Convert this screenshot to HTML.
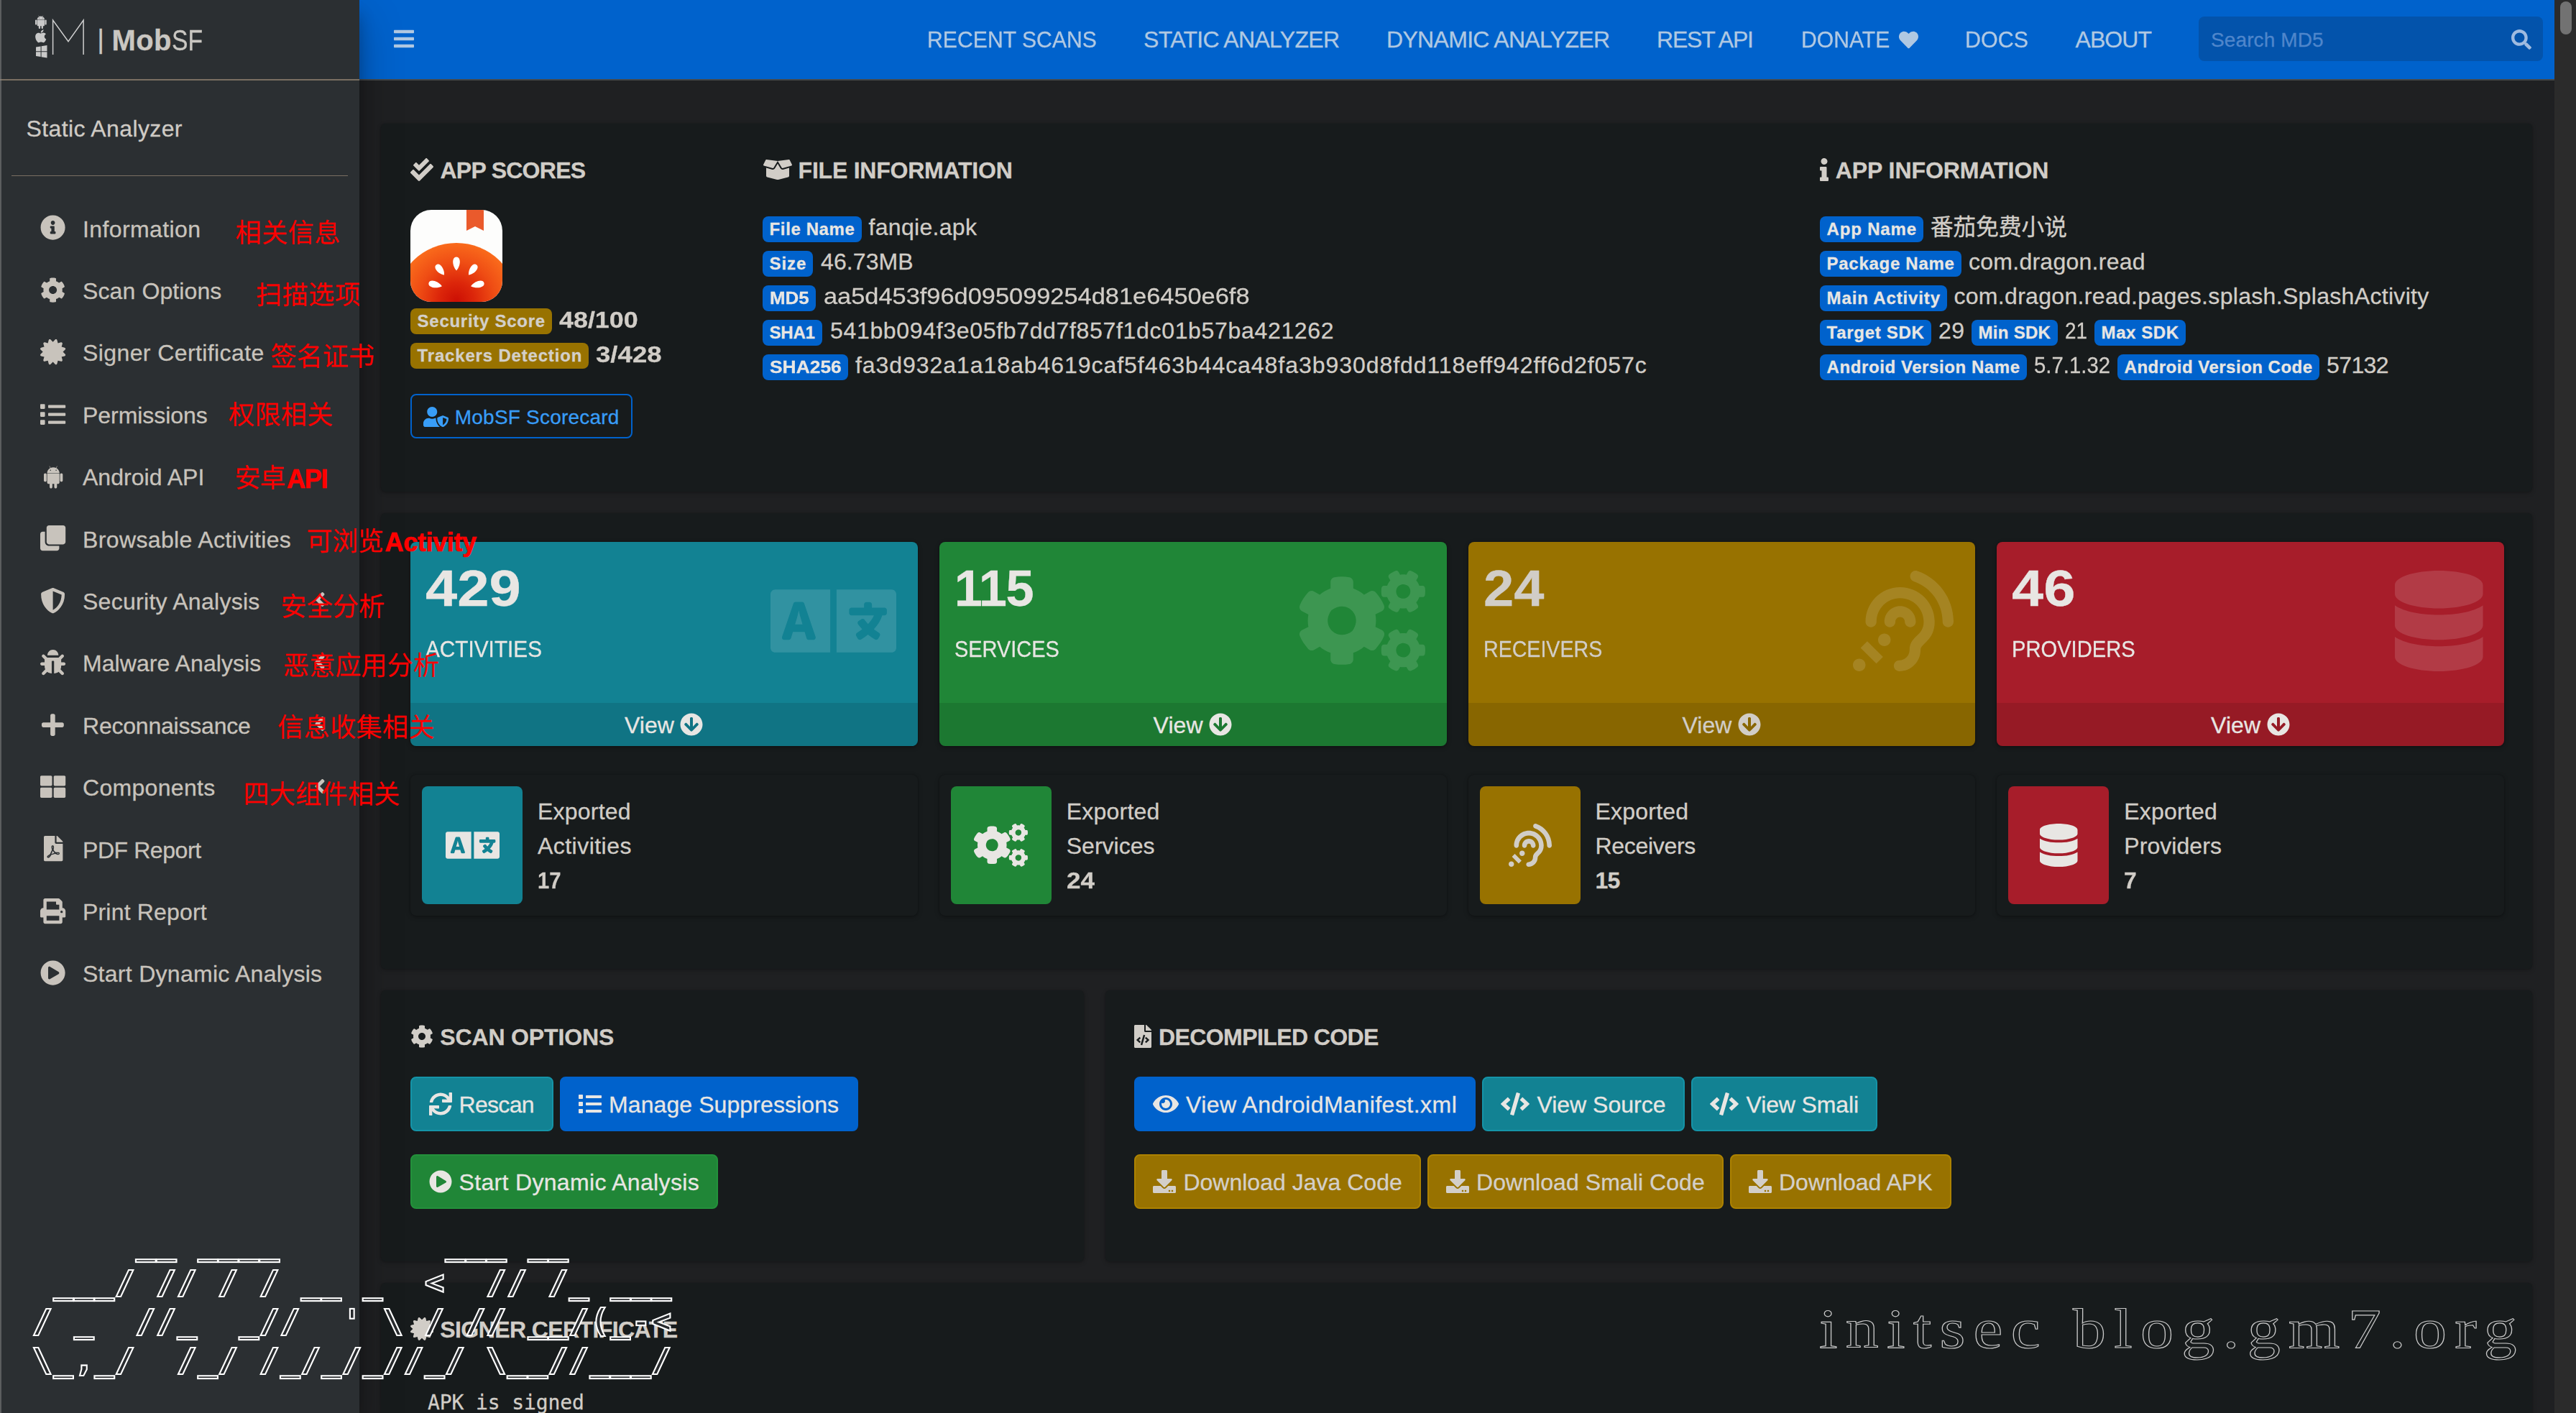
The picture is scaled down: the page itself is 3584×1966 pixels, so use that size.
<!DOCTYPE html>
<html lang="en"><head><meta charset="utf-8"><title>Static Analysis - MobSF</title><style>
html,body{margin:0;padding:0;background:#1f2022;}
body{width:3584px;height:1966px;overflow:hidden;position:relative;font-family:"Liberation Sans","Noto Sans CJK SC",sans-serif;}
.t{position:absolute;white-space:pre;display:block;-webkit-text-stroke:0.3px;}
.b{position:absolute;}
.ic{position:absolute;display:block;overflow:visible;}
.content{position:absolute;left:0;top:0;width:3584px;height:1966px;background:#1f2022;overflow:hidden;}
.navbar{position:absolute;left:500px;top:0;width:3054px;height:110px;background:#0062cc;border-bottom:2px solid #45484a;}
.navbar>*{margin-left:-500px;}
.sidebar{position:absolute;left:0;top:0;width:500px;height:1966px;background:#2b2f32;box-shadow:0 28px 56px rgba(0,0,0,.25),0 20px 20px rgba(0,0,0,.22);}
.tf{position:absolute;left:0;right:0;bottom:0;height:60.5px;background:rgba(0,0,0,.1);}
.anno{position:absolute;left:0;top:0;}
.wm1{position:absolute;margin:0;left:46.5px;top:1703px;font-family:"DejaVu Sans Mono","Liberation Mono",monospace;font-size:42.6px;line-height:54.1px;letter-spacing:3.06px;color:#282b2e;-webkit-text-stroke:4.2px #ffffff;paint-order:stroke fill;filter:blur(0.45px);white-space:pre;}
</style></head><body>
<main class="content">
<div class="b card" style="left:530px;top:172px;width:2993px;height:512px;background:#171b1c;box-shadow:0 0 2px rgba(0,0,0,.18),0 2px 6px rgba(0,0,0,.24);border-radius:6px;"></div>
<div class="b card" style="left:530px;top:714px;width:2993px;height:633.5px;background:#171b1c;box-shadow:0 0 2px rgba(0,0,0,.18),0 2px 6px rgba(0,0,0,.24);border-radius:6px;"></div>
<div class="b card" style="left:530px;top:1378px;width:978px;height:377px;background:#171b1c;box-shadow:0 0 2px rgba(0,0,0,.18),0 2px 6px rgba(0,0,0,.24);border-radius:6px;"></div>
<div class="b card" style="left:1538px;top:1378px;width:1985px;height:377px;background:#171b1c;box-shadow:0 0 2px rgba(0,0,0,.18),0 2px 6px rgba(0,0,0,.24);border-radius:6px;"></div>
<div class="b card" style="left:530px;top:1785px;width:2993px;height:260px;background:#171b1c;box-shadow:0 0 2px rgba(0,0,0,.18),0 2px 6px rgba(0,0,0,.24);border-radius:6px;"></div>
<svg class="ic" style="left:571px;top:220.4px;" width="32" height="32" viewBox="0 -448 512 512"><path fill="#d1cdc7" transform="scale(1,-1)" d="M505 273.2c9.2998 -9.2998 9.2998 -24.5 -0.0996094 -34l-296 -296.2c-9.30078 -9.40039 -24.5 -9.40039 -33.9004 0l-168 168.1c-9.40039 9.40039 -9.40039 24.6006 0 34l39.7002 39.7002c9.2998 9.40039 24.5 9.40039 33.8994 0l111.4 -111.5l239.5 239.5 c9.2998 9.40039 24.5 9.40039 33.9004 0zM180.7 167.2l-112 112.2c-6.2002 6.19922 -6.2002 16.2998 0 22.5996l45.2998 45.2998c6.2002 6.2998 16.4004 6.2998 22.5996 0l55.4004 -55.5l151.5 151.5c6.2002 6.2998 16.4004 6.2998 22.5996 0l45.2002 -45.2998 c6.2002 -6.2002 6.2002 -16.2998 0 -22.5996l-208 -208.2c-6.2002 -6.2998 -16.3994 -6.2998 -22.5996 0z"/></svg>
<span id="t0" class="t " style="left:612.5px;top:221.31px;font-size:32px;line-height:32px;color:#d1cdc7;font-weight:700;letter-spacing:-0.74px;">APP SCORES</span>
<svg class="ic" style="left:571px;top:292px" width="128" height="128" viewBox="0 0 128 128"><clipPath id="ac"><rect width="128" height="128" rx="29" ry="29"/></clipPath><radialGradient id="ag" gradientUnits="userSpaceOnUse" cx="64" cy="126" r="82"><stop offset="0" stop-color="#cc0f04"/><stop offset="0.3" stop-color="#dc260a"/><stop offset="0.65" stop-color="#ef4d14"/><stop offset="1" stop-color="#fa6c1c"/></radialGradient><g clip-path="url(#ac)"><rect width="128" height="128" fill="#fdfdfc"/><ellipse cx="64" cy="128" rx="84" ry="82" fill="url(#ag)"/><path d="M78 0h24v29l-12-6-12 6z" fill="#ea5a2c"/><g fill="#fff"><path transform="translate(64 75) rotate(0)" d="M0,-9.5 C6.4,-9.5 6.4,2.375 0,9.5 C-6.4,2.375 -6.4,-9.5 0,-9.5Z"/><path transform="translate(41.5 83.5) rotate(-38)" d="M0,-9.0 C6,-9.0 6,2.25 0,9.0 C-6,2.25 -6,-9.0 0,-9.0Z"/><path transform="translate(86.5 83.5) rotate(38)" d="M0,-9.0 C6,-9.0 6,2.25 0,9.0 C-6,2.25 -6,-9.0 0,-9.0Z"/><path transform="translate(34.7 104) rotate(-76)" d="M0,-9.5 C6.2,-9.5 6.2,2.375 0,9.5 C-6.2,2.375 -6.2,-9.5 0,-9.5Z"/><path transform="translate(93.3 104) rotate(76)" d="M0,-9.5 C6.2,-9.5 6.2,2.375 0,9.5 C-6.2,2.375 -6.2,-9.5 0,-9.5Z"/></g></g></svg>
<div class="b badge" style="left:571px;top:429px;width:196.7px;height:36px;background:#987200;border-radius:8px;"></div><span id="t1" class="t " style="left:580.6px;top:435px;font-size:24px;line-height:24px;color:#d3cfc9;font-weight:700;letter-spacing:0.72px;">Security Score</span>
<span id="t2" class="t " style="left:778px;top:428.91px;font-size:32px;line-height:32px;color:#d1cdc7;font-weight:700;transform:scaleX(1.1208);transform-origin:0 0;">48/100</span>
<div class="b badge" style="left:571px;top:477px;width:248px;height:36px;background:#987200;border-radius:8px;"></div><span id="t3" class="t " style="left:580.6px;top:483px;font-size:24px;line-height:24px;color:#d3cfc9;font-weight:700;letter-spacing:0.82px;">Trackers Detection</span>
<span id="t4" class="t " style="left:829px;top:476.91px;font-size:32px;line-height:32px;color:#d1cdc7;font-weight:700;transform:scaleX(1.1439);transform-origin:0 0;">3/428</span>
<div class="b btn-o" style="left:571px;top:548px;width:309px;height:62px;background:transparent;border:2px solid #0062cc;border-radius:8px;box-sizing:border-box;"></div>
<svg class="ic" style="left:589px;top:565.5px;" width="35" height="28" viewBox="0 -448 640 512"><path fill="#389df7" transform="scale(1,-1)" d="M622.3 176.9c10.7002 -4.2002 17.7002 -14 17.7002 -24.9004c0 -124.5 -81.5996 -193.9 -132.9 -213.9c-4.19922 -1.59961 -12.5996 -3.69922 -22.1992 0c-64.2002 25.1006 -132.9 102.301 -132.9 213.9c0 10.9004 7 20.7002 17.7002 24.9004l115.2 45 c9.59961 3.69922 18.0996 1.59961 22.1992 0zM496 -14.4004c34.5996 16.4004 89.9004 64.7002 95.5 151.801l-95.5 37.2998v-189.101zM224 192c-70.7002 0 -128 57.2998 -128 128s57.2998 128 128 128s128 -57.2998 128 -128s-57.2998 -128 -128 -128zM320 152 c0 -95.2998 45.2002 -169.1 99.2002 -212c-5.90039 -2.5 -12.4004 -4 -19.2002 -4h-352c-26.5 0 -48 21.5 -48 48v41.5996c0 74.2002 60.2002 134.4 134.4 134.4h16.6992c22.3008 -10.2002 46.9004 -16 72.9004 -16s50.7002 5.7998 72.9004 16h16.6992 c2.60059 0 5 -0.700195 7.5 -0.799805c-0.299805 -2.40039 -1.09961 -4.7002 -1.09961 -7.2002z"/></svg>
<span id="t5" class="t " style="left:632.8px;top:566.6px;font-size:28px;line-height:28px;color:#389df7;letter-spacing:0.21px;">MobSF Scorecard</span>
<svg class="ic" style="left:1061.5px;top:220.4px;" width="40" height="32" viewBox="0 -448 640 512"><path fill="#d1cdc7" transform="scale(1,-1)" d="M425.7 192c4.5 0 9 0.599609 13.2998 1.90039l137 39.0996v-178c0 -14.5996 -10 -27.4004 -24.2002 -31l-216.399 -54.0996c-10.1006 -2.5 -20.8008 -2.5 -31 0l-216.2 54.0996c-14.2002 3.5 -24.2002 16.2998 -24.2002 31v178l137 -39.2002 c4.2998 -1.2998 8.7998 -1.89941 13.2998 -1.89941c16.9004 0 32.7998 9 41.5 23.5l64.2002 106.6l64.2998 -106.6c8.60059 -14.4004 24.5 -23.4004 41.4004 -23.4004zM638.3 304.2c4.5 -9.2002 -0.299805 -20.2002 -10.2002 -23.1006l-197.899 -56.5 c-7.10059 -2 -14.7002 1 -18.5 7.30078l-91.7002 152.1l250.1 31.9004c6.90039 0.899414 13.6006 -2.7002 16.7002 -8.90039zM53.2002 407c3.09961 6.2002 9.7002 9.7002 16.5996 8.90039l250.2 -31.9004l-91.7998 -152c-3.7998 -6.2998 -11.4004 -9.2998 -18.5 -7.2998 l-197.9 56.5c-9.7998 2.7998 -14.7002 13.7998 -10.0996 23z"/></svg>
<span id="t6" class="t " style="left:1110.6px;top:221.31px;font-size:32px;line-height:32px;color:#d1cdc7;font-weight:700;letter-spacing:-0.23px;">FILE INFORMATION</span>
<div class="b badge" style="left:1061px;top:301px;width:137.5px;height:36px;background:#0062cc;border-radius:8px;"></div><span id="t7" class="t " style="left:1070.6px;top:307px;font-size:24px;line-height:24px;color:#e8e6e3;font-weight:700;letter-spacing:0.61px;">File Name</span>
<span id="t8" class="t " style="left:1208.5px;top:300.41px;font-size:32px;line-height:32px;color:#d1cdc7;letter-spacing:0.31px;">fanqie.apk</span>
<div class="b badge" style="left:1061px;top:349px;width:70px;height:36px;background:#0062cc;border-radius:8px;"></div><span id="t9" class="t " style="left:1070.6px;top:355px;font-size:24px;line-height:24px;color:#e8e6e3;font-weight:700;letter-spacing:0.92px;">Size</span>
<span id="t10" class="t " style="left:1142px;top:348.41px;font-size:32px;line-height:32px;color:#d1cdc7;letter-spacing:0.09px;">46.73MB</span>
<div class="b badge" style="left:1061px;top:397px;width:74px;height:36px;background:#0062cc;border-radius:8px;"></div><span id="t11" class="t " style="left:1070.6px;top:403px;font-size:24px;line-height:24px;color:#e8e6e3;font-weight:700;transform:scaleX(1.0815);transform-origin:0 0;">MD5</span>
<span id="t12" class="t " style="left:1146px;top:396.41px;font-size:32px;line-height:32px;color:#d1cdc7;transform:scaleX(1.0740);transform-origin:0 0;">aa5d453f96d095099254d81e6450e6f8</span>
<div class="b badge" style="left:1061px;top:445px;width:82.5px;height:36px;background:#0062cc;border-radius:8px;"></div><span id="t13" class="t " style="left:1070.6px;top:451px;font-size:24px;line-height:24px;color:#e8e6e3;font-weight:700;letter-spacing:-0.24px;">SHA1</span>
<span id="t14" class="t " style="left:1155px;top:444.41px;font-size:32px;line-height:32px;color:#d1cdc7;letter-spacing:0.67px;">541bb094f3e05fb7dd7f857f1dc01b57ba421262</span>
<div class="b badge" style="left:1061px;top:493px;width:119px;height:36px;background:#0062cc;border-radius:8px;"></div><span id="t15" class="t " style="left:1070.6px;top:499px;font-size:24px;line-height:24px;color:#e8e6e3;font-weight:700;transform:scaleX(1.1001);transform-origin:0 0;">SHA256</span>
<span id="t16" class="t " style="left:1190px;top:492.41px;font-size:32px;line-height:32px;color:#d1cdc7;letter-spacing:0.95px;">fa3d932a1a18ab4619caf5f463b44ca48fa3b930d8fdd118eff942ff6d2f057c</span>
<svg class="ic" style="left:2532px;top:220.4px;" width="12" height="32" viewBox="0 -448 192 512"><path fill="#d1cdc7" transform="scale(1,-1)" d="M20 23.7715h20v144.457h-20c-11.0459 0 -20 8.9541 -20 20v47.7715c0 11.0459 8.9541 20 20 20h112c11.0459 0 20 -8.9541 20 -20v-212.229h20c11.0459 0 20 -8.9541 20 -20v-47.7715c0 -11.0459 -8.9541 -20 -20 -20h-152c-11.0459 0 -20 8.9541 -20 20v47.7715 c0 11.0459 8.9541 20 20 20zM96 448c39.7637 0 72 -32.2354 72 -72s-32.2354 -72 -72 -72s-72 32.2354 -72 72s32.2354 72 72 72z"/></svg>
<span id="t17" class="t " style="left:2553.7px;top:221.31px;font-size:32px;line-height:32px;color:#d1cdc7;font-weight:700;letter-spacing:-0.06px;">APP INFORMATION</span>
<div class="b badge" style="left:2532px;top:301px;width:143.6px;height:36px;background:#0062cc;border-radius:8px;"></div><span id="t18" class="t " style="left:2541.6px;top:307px;font-size:24px;line-height:24px;color:#e8e6e3;font-weight:700;letter-spacing:0.82px;">App Name</span>
<span id="t19" class="t " style="left:2685.7px;top:300.41px;font-size:32px;line-height:32px;color:#d1cdc7;font-family:'Liberation Sans','Noto Sans CJK SC',sans-serif;letter-spacing:-0.34px;">番茄免费小说</span>
<div class="b badge" style="left:2532px;top:349px;width:196.5px;height:36px;background:#0062cc;border-radius:8px;"></div><span id="t20" class="t " style="left:2541.6px;top:355px;font-size:24px;line-height:24px;color:#e8e6e3;font-weight:700;letter-spacing:0.71px;">Package Name</span>
<span id="t21" class="t " style="left:2739px;top:348.41px;font-size:32px;line-height:32px;color:#d1cdc7;letter-spacing:0.26px;">com.dragon.read</span>
<div class="b badge" style="left:2532px;top:397px;width:176.7px;height:36px;background:#0062cc;border-radius:8px;"></div><span id="t22" class="t " style="left:2541.6px;top:403px;font-size:24px;line-height:24px;color:#e8e6e3;font-weight:700;letter-spacing:0.86px;">Main Activity</span>
<span id="t23" class="t " style="left:2718.4px;top:396.41px;font-size:32px;line-height:32px;color:#d1cdc7;letter-spacing:0.32px;">com.dragon.read.pages.splash.SplashActivity</span>
<div class="b badge" style="left:2532px;top:445px;width:154.5px;height:36px;background:#0062cc;border-radius:8px;"></div><span id="t24" class="t " style="left:2541.6px;top:451px;font-size:24px;line-height:24px;color:#e8e6e3;font-weight:700;letter-spacing:0.71px;">Target SDK</span>
<span id="t25" class="t " style="left:2697px;top:444.41px;font-size:32px;line-height:32px;color:#d1cdc7;letter-spacing:0.41px;">29</span>
<div class="b badge" style="left:2743px;top:445px;width:119.5px;height:36px;background:#0062cc;border-radius:8px;"></div><span id="t26" class="t " style="left:2752.6px;top:451px;font-size:24px;line-height:24px;color:#e8e6e3;font-weight:700;letter-spacing:0.27px;">Min SDK</span>
<span id="t27" class="t " style="left:2873.4px;top:444.41px;font-size:32px;line-height:32px;color:#d1cdc7;transform:scaleX(0.8709);transform-origin:0 0;">21</span>
<div class="b badge" style="left:2914px;top:445px;width:126.6px;height:36px;background:#0062cc;border-radius:8px;"></div><span id="t28" class="t " style="left:2923.6px;top:451px;font-size:24px;line-height:24px;color:#e8e6e3;font-weight:700;letter-spacing:0.56px;">Max SDK</span>
<div class="b badge" style="left:2532px;top:493px;width:287.7px;height:36px;background:#0062cc;border-radius:8px;"></div><span id="t29" class="t " style="left:2541.6px;top:499px;font-size:24px;line-height:24px;color:#e8e6e3;font-weight:700;letter-spacing:0.58px;">Android Version Name</span>
<span id="t30" class="t " style="left:2830px;top:492.41px;font-size:32px;line-height:32px;color:#d1cdc7;transform:scaleX(0.9165);transform-origin:0 0;">5.7.1.32</span>
<div class="b badge" style="left:2946px;top:493px;width:280.7px;height:36px;background:#0062cc;border-radius:8px;"></div><span id="t31" class="t " style="left:2955.6px;top:499px;font-size:24px;line-height:24px;color:#e8e6e3;font-weight:700;letter-spacing:0.5px;">Android Version Code</span>
<span id="t32" class="t " style="left:3237px;top:492.41px;font-size:32px;line-height:32px;color:#d1cdc7;letter-spacing:-0.6px;">57132</span>
<div class="b tile" style="left:571px;top:754px;width:705.75px;height:284px;background:#128293;border-radius:8px;overflow:hidden;box-shadow:0 0 2px rgba(0,0,0,.25),0 2px 6px rgba(0,0,0,.3);"><div class="tf"></div></div>
<svg class="ic" style="left:1071.75px;top:794px;" width="175" height="140" viewBox="0 -448 640 512"><path fill="rgba(255,255,255,.135)" transform="scale(1,-1)" d="M152.1 211.8l10.9004 -37.5h-38.0996l11.0996 37.5c3.5 12.1006 7.7998 33.2002 7.7998 33.2002h0.5s4.2998 -21.0996 7.7998 -33.2002zM616 352c13.2998 0 24 -10.7002 24 -24v-272c0 -13.2998 -10.7002 -24 -24 -24h-280v320h280zM592 232v16 c0 6.59961 -5.40039 12 -12 12h-64v16c0 6.59961 -5.40039 12 -12 12h-16c-6.59961 0 -12 -5.40039 -12 -12v-16h-64c-6.59961 0 -12 -5.40039 -12 -12v-16c0 -6.59961 5.40039 -12 12 -12h114.3c-6.2002 -14.2998 -16.5 -29 -30 -43.2002 c-6.59961 6.90039 -12.3994 13.9004 -17.3994 20.9004c-3.60059 5.09961 -10.6006 6.59961 -16 3.39941l-7.30078 -4.2998l-6.5 -3.89941c-5.89941 -3.5 -7.69922 -11.4004 -3.69922 -17.1006c6.09961 -8.7002 13.0996 -17.2998 21 -25.7002 c-8.10059 -6.2998 -16.8008 -12.2998 -26.1006 -18c-5.59961 -3.39941 -7.39941 -10.5996 -4.2002 -16.1992l7.90039 -13.9004c3.40039 -5.90039 10.9004 -7.7998 16.7002 -4.2998c12.7002 7.7998 24.5 16.2002 35.3994 24.8994 c10.9004 -8.7998 22.8008 -17.0996 35.4004 -24.8994c5.7998 -3.5 13.2998 -1.60059 16.7002 4.2998l7.89941 13.9004c3.2002 5.69922 1.40039 12.7998 -4.09961 16.1992c-9 5.5 -17.7002 11.6006 -26.0996 18c21 22.5 35.7998 46.3008 42.6992 69.9004h11.4004 c6.59961 0 12 5.40039 12 12zM0 328c0 13.2998 10.7002 24 24 24h280v-320h-280c-13.2998 0 -24 10.7002 -24 24v272zM58.9004 111.9c-2.60059 -7.80078 3.19922 -15.9004 11.3994 -15.9004h22.9004c5.2998 0 10 3.59961 11.5 8.7002l9.09961 31.7998h60.2002 l9.40039 -31.9004c1.4668 -4.96582 6.06152 -8.5957 11.5 -8.59961h22.8994c8.2998 0 14 8.09961 11.4004 15.9004l-57.5 169.1c-1.7002 4.7998 -6.2998 8.09961 -11.4004 8.09961h-32.5c-5.2002 0 -9.7002 -3.19922 -11.3994 -8.09961z"/></svg>
<span id="t33" class="t " style="left:592px;top:784.01px;font-size:70.4px;line-height:70.4px;color:#e8e6e3;font-weight:700;transform:scaleX(1.1307);transform-origin:0 0;">429</span>
<span id="t34" class="t " style="left:592px;top:886.91px;font-size:32px;line-height:32px;color:#e8e6e3;transform:scaleX(0.9297);transform-origin:0 0;">ACTIVITIES</span>
<span id="t35" class="t " style="left:868.88px;top:992.91px;font-size:32px;line-height:32px;color:#e8e6e3;letter-spacing:0.07px;">View</span>
<svg class="ic" style="left:946.38px;top:992px;" width="32" height="32" viewBox="0 -448 512 512"><path fill="#e8e6e3" transform="scale(1,-1)" d="M504 192c0 -137 -111 -248 -248 -248s-248 111 -248 248s111 248 248 248s248 -111 248 -248zM360.4 220.9l-72.4004 -75.5v182.6c0 13.2998 -10.7002 24 -24 24h-16c-13.2998 0 -24 -10.7002 -24 -24v-182.6l-72.4004 75.5 c-9.2998 9.69922 -24.7998 9.89941 -34.2998 0.399414l-10.8994 -11c-9.40039 -9.39941 -9.40039 -24.5996 0 -33.8994l132.6 -132.7c9.40039 -9.40039 24.5996 -9.40039 33.9004 0l132.699 132.7c9.40039 9.39941 9.40039 24.5996 0 33.8994l-10.8994 11 c-9.5 9.5 -25 9.2998 -34.2998 -0.399414z"/></svg>
<div class="b ibox" style="left:571px;top:1077.5px;width:705.75px;height:196px;background:#171b1c;border-radius:8px;box-shadow:0 0 2px rgba(0,0,0,.22),0 2px 6px rgba(0,0,0,.28);"></div>
<div class="b ibi" style="left:587px;top:1093.5px;width:140px;height:164px;background:#128293;border-radius:8px;"></div>
<svg class="ic" style="left:619.5px;top:1145.5px;" width="75" height="60" viewBox="0 -448 640 512"><path fill="#e8e6e3" transform="scale(1,-1)" d="M152.1 211.8l10.9004 -37.5h-38.0996l11.0996 37.5c3.5 12.1006 7.7998 33.2002 7.7998 33.2002h0.5s4.2998 -21.0996 7.7998 -33.2002zM616 352c13.2998 0 24 -10.7002 24 -24v-272c0 -13.2998 -10.7002 -24 -24 -24h-280v320h280zM592 232v16 c0 6.59961 -5.40039 12 -12 12h-64v16c0 6.59961 -5.40039 12 -12 12h-16c-6.59961 0 -12 -5.40039 -12 -12v-16h-64c-6.59961 0 -12 -5.40039 -12 -12v-16c0 -6.59961 5.40039 -12 12 -12h114.3c-6.2002 -14.2998 -16.5 -29 -30 -43.2002 c-6.59961 6.90039 -12.3994 13.9004 -17.3994 20.9004c-3.60059 5.09961 -10.6006 6.59961 -16 3.39941l-7.30078 -4.2998l-6.5 -3.89941c-5.89941 -3.5 -7.69922 -11.4004 -3.69922 -17.1006c6.09961 -8.7002 13.0996 -17.2998 21 -25.7002 c-8.10059 -6.2998 -16.8008 -12.2998 -26.1006 -18c-5.59961 -3.39941 -7.39941 -10.5996 -4.2002 -16.1992l7.90039 -13.9004c3.40039 -5.90039 10.9004 -7.7998 16.7002 -4.2998c12.7002 7.7998 24.5 16.2002 35.3994 24.8994 c10.9004 -8.7998 22.8008 -17.0996 35.4004 -24.8994c5.7998 -3.5 13.2998 -1.60059 16.7002 4.2998l7.89941 13.9004c3.2002 5.69922 1.40039 12.7998 -4.09961 16.1992c-9 5.5 -17.7002 11.6006 -26.0996 18c21 22.5 35.7998 46.3008 42.6992 69.9004h11.4004 c6.59961 0 12 5.40039 12 12zM0 328c0 13.2998 10.7002 24 24 24h280v-320h-280c-13.2998 0 -24 10.7002 -24 24v272zM58.9004 111.9c-2.60059 -7.80078 3.19922 -15.9004 11.3994 -15.9004h22.9004c5.2998 0 10 3.59961 11.5 8.7002l9.09961 31.7998h60.2002 l9.40039 -31.9004c1.4668 -4.96582 6.06152 -8.5957 11.5 -8.59961h22.8994c8.2998 0 14 8.09961 11.4004 15.9004l-57.5 169.1c-1.7002 4.7998 -6.2998 8.09961 -11.4004 8.09961h-32.5c-5.2002 0 -9.7002 -3.19922 -11.3994 -8.09961z"/></svg>
<span id="t36" class="t " style="left:748px;top:1112.61px;font-size:32px;line-height:32px;color:#d1cdc7;letter-spacing:0.22px;">Exported</span>
<span id="t37" class="t " style="left:748px;top:1160.91px;font-size:32px;line-height:32px;color:#d1cdc7;letter-spacing:0.46px;">Activities</span>
<span id="t38" class="t " style="left:748px;top:1208.71px;font-size:32px;line-height:32px;color:#d1cdc7;font-weight:700;transform:scaleX(0.9131);transform-origin:0 0;">17</span>
<div class="b tile" style="left:1306.75px;top:754px;width:705.75px;height:284px;background:#208637;border-radius:8px;overflow:hidden;box-shadow:0 0 2px rgba(0,0,0,.25),0 2px 6px rgba(0,0,0,.3);"><div class="tf"></div></div>
<svg class="ic" style="left:1807.5px;top:794px;" width="175" height="140" viewBox="0 -448 640 512"><path fill="rgba(255,255,255,.135)" transform="scale(1,-1)" d="M512.1 257l-8.19922 -14.2998c-3 -5.2998 -9.40039 -7.5 -15.1006 -5.40039c-11.7998 4.40039 -22.5996 10.7002 -32.0996 18.6006c-4.60059 3.7998 -5.7998 10.5 -2.7998 15.6992l8.19922 14.3008c-6.89941 8 -12.2998 17.2998 -15.8994 27.3994h-16.5 c-6 0 -11.2002 4.2998 -12.2002 10.2998c-2 12 -2.09961 24.6006 0 37.1006c1 6 6.2002 10.3994 12.2002 10.3994h16.5c3.59961 10.1006 9 19.4004 15.8994 27.4004l-8.19922 14.2998c-3 5.2002 -1.90039 11.9004 2.7998 15.7002 c9.5 7.90039 20.3994 14.2002 32.0996 18.5996c5.7002 2.10059 12.1006 -0.0996094 15.1006 -5.39941l8.19922 -14.2998c10.5 1.89941 21.2002 1.89941 31.7002 0l8.2002 14.2998c3 5.2998 9.40039 7.5 15.0996 5.39941c11.8008 -4.39941 22.6006 -10.6992 32.1006 -18.5996 c4.59961 -3.7998 5.7998 -10.5 2.7998 -15.7002l-8.2002 -14.2998c6.90039 -8 12.2998 -17.2998 15.9004 -27.4004h16.5c6 0 11.2002 -4.2998 12.2002 -10.2998c2 -12 2.09961 -24.5996 0 -37.0996c-1 -6 -6.2002 -10.4004 -12.2002 -10.4004h-16.5 c-3.60059 -10.0996 -9 -19.3994 -15.9004 -27.3994l8.2002 -14.3008c3 -5.19922 1.90039 -11.8994 -2.7998 -15.6992c-9.5 -7.90039 -20.4004 -14.2002 -32.1006 -18.6006c-5.69922 -2.09961 -12.0996 0.100586 -15.0996 5.40039l-8.2002 14.2998 c-10.3994 -1.90039 -21.2002 -1.90039 -31.7002 0zM501.6 315.8c38.5 -29.5996 82.4004 14.2998 52.8008 52.7998c-38.5 29.7002 -82.4004 -14.2998 -52.8008 -52.7998zM386.3 161.9l33.7002 -16.8008c10.0996 -5.7998 14.5 -18.0996 10.5 -29.0996 c-8.90039 -24.2002 -26.4004 -46.4004 -42.5996 -65.7998c-7.40039 -8.90039 -20.2002 -11.1006 -30.3008 -5.2998l-29.0996 16.7998c-16 -13.7002 -34.5996 -24.6006 -54.9004 -31.7002v-33.5996c0 -11.6006 -8.2998 -21.6006 -19.6992 -23.6006 c-24.6006 -4.2002 -50.4004 -4.39941 -75.9004 0c-11.5 2 -20 11.9004 -20 23.6006v33.5996c-20.2998 7.2002 -38.9004 18 -54.9004 31.7002l-29.0996 -16.7002c-10 -5.7998 -22.9004 -3.59961 -30.2998 5.2998c-16.2002 19.4004 -33.2998 41.6006 -42.2002 65.7002 c-4 10.9004 0.400391 23.2002 10.5 29.0996l33.2998 16.8008c-3.89941 20.8994 -3.89941 42.3994 0 63.3994l-33.2998 16.9004c-10.0996 5.7998 -14.5996 18.0996 -10.5 29c8.90039 24.2002 26 46.3994 42.2002 65.7998c7.39941 8.90039 20.2002 11.0996 30.2998 5.2998 l29.0996 -16.7998c16 13.7002 34.6006 24.5996 54.9004 31.7002v33.7002c0 11.5 8.2002 21.5 19.5996 23.5c24.6006 4.19922 50.5 4.39941 76 0.0996094c11.5 -2 20 -11.9004 20 -23.5996v-33.6006c20.3008 -7.2002 38.9004 -18 54.9004 -31.7002l29.0996 16.8008 c10 5.7998 22.9004 3.59961 30.3008 -5.30078c16.1992 -19.3994 33.1992 -41.5996 42.0996 -65.7998c4 -10.8994 0.0996094 -23.2002 -10 -29.0996l-33.7002 -16.7998c3.90039 -21 3.90039 -42.5 0 -63.5zM268.7 140.8c59.2002 77 -28.7002 164.9 -105.7 105.7 c-59.2002 -77 28.7002 -164.9 105.7 -105.7zM512.1 -41.9004l-8.19922 -14.2998c-3 -5.2998 -9.40039 -7.5 -15.1006 -5.39941c-11.7998 4.39941 -22.5996 10.6992 -32.0996 18.5996c-4.60059 3.7998 -5.7998 10.5 -2.7998 15.7002l8.19922 14.2998 c-6.89941 8 -12.2998 17.2998 -15.8994 27.4004h-16.5c-6 0 -11.2002 4.2998 -12.2002 10.2998c-2 12 -2.09961 24.5996 0 37.0996c1 6 6.2002 10.4004 12.2002 10.4004h16.5c3.59961 10.0996 9 19.3994 15.8994 27.3994l-8.19922 14.3008 c-3 5.19922 -1.90039 11.8994 2.7998 15.6992c9.5 7.90039 20.3994 14.2002 32.0996 18.6006c5.7002 2.09961 12.1006 -0.100586 15.1006 -5.40039l8.19922 -14.2998c10.5 1.90039 21.2002 1.90039 31.7002 0l8.2002 14.2998c3 5.2998 9.40039 7.5 15.0996 5.40039 c11.8008 -4.40039 22.6006 -10.7002 32.1006 -18.6006c4.59961 -3.7998 5.7998 -10.5 2.7998 -15.6992l-8.2002 -14.3008c6.90039 -8 12.2998 -17.2998 15.9004 -27.3994h16.5c6 0 11.2002 -4.2998 12.2002 -10.2998c2 -12 2.09961 -24.6006 0 -37.1006 c-1 -6 -6.2002 -10.3994 -12.2002 -10.3994h-16.5c-3.60059 -10.1006 -9 -19.4004 -15.9004 -27.4004l8.2002 -14.2998c3 -5.2002 1.90039 -11.9004 -2.7998 -15.7002c-9.5 -7.90039 -20.4004 -14.2002 -32.1006 -18.5996 c-5.69922 -2.10059 -12.0996 0.0996094 -15.0996 5.39941l-8.2002 14.2998c-10.3994 -1.89941 -21.2002 -1.89941 -31.7002 0zM501.6 17c38.5 -29.5996 82.4004 14.2998 52.8008 52.7998c-38.5 29.6006 -82.4004 -14.2998 -52.8008 -52.7998z"/></svg>
<span id="t39" class="t " style="left:1327.75px;top:784.01px;font-size:70.4px;line-height:70.4px;color:#e8e6e3;font-weight:700;letter-spacing:-1.28px;">115</span>
<span id="t40" class="t " style="left:1327.75px;top:886.91px;font-size:32px;line-height:32px;color:#e8e6e3;transform:scaleX(0.9042);transform-origin:0 0;">SERVICES</span>
<span id="t41" class="t " style="left:1604.62px;top:992.91px;font-size:32px;line-height:32px;color:#e8e6e3;letter-spacing:0.07px;">View</span>
<svg class="ic" style="left:1682.12px;top:992px;" width="32" height="32" viewBox="0 -448 512 512"><path fill="#e8e6e3" transform="scale(1,-1)" d="M504 192c0 -137 -111 -248 -248 -248s-248 111 -248 248s111 248 248 248s248 -111 248 -248zM360.4 220.9l-72.4004 -75.5v182.6c0 13.2998 -10.7002 24 -24 24h-16c-13.2998 0 -24 -10.7002 -24 -24v-182.6l-72.4004 75.5 c-9.2998 9.69922 -24.7998 9.89941 -34.2998 0.399414l-10.8994 -11c-9.40039 -9.39941 -9.40039 -24.5996 0 -33.8994l132.6 -132.7c9.40039 -9.40039 24.5996 -9.40039 33.9004 0l132.699 132.7c9.40039 9.39941 9.40039 24.5996 0 33.8994l-10.8994 11 c-9.5 9.5 -25 9.2998 -34.2998 -0.399414z"/></svg>
<div class="b ibox" style="left:1306.75px;top:1077.5px;width:705.75px;height:196px;background:#171b1c;border-radius:8px;box-shadow:0 0 2px rgba(0,0,0,.22),0 2px 6px rgba(0,0,0,.28);"></div>
<div class="b ibi" style="left:1322.75px;top:1093.5px;width:140px;height:164px;background:#208637;border-radius:8px;"></div>
<svg class="ic" style="left:1355.25px;top:1145.5px;" width="75" height="60" viewBox="0 -448 640 512"><path fill="#e8e6e3" transform="scale(1,-1)" d="M512.1 257l-8.19922 -14.2998c-3 -5.2998 -9.40039 -7.5 -15.1006 -5.40039c-11.7998 4.40039 -22.5996 10.7002 -32.0996 18.6006c-4.60059 3.7998 -5.7998 10.5 -2.7998 15.6992l8.19922 14.3008c-6.89941 8 -12.2998 17.2998 -15.8994 27.3994h-16.5 c-6 0 -11.2002 4.2998 -12.2002 10.2998c-2 12 -2.09961 24.6006 0 37.1006c1 6 6.2002 10.3994 12.2002 10.3994h16.5c3.59961 10.1006 9 19.4004 15.8994 27.4004l-8.19922 14.2998c-3 5.2002 -1.90039 11.9004 2.7998 15.7002 c9.5 7.90039 20.3994 14.2002 32.0996 18.5996c5.7002 2.10059 12.1006 -0.0996094 15.1006 -5.39941l8.19922 -14.2998c10.5 1.89941 21.2002 1.89941 31.7002 0l8.2002 14.2998c3 5.2998 9.40039 7.5 15.0996 5.39941c11.8008 -4.39941 22.6006 -10.6992 32.1006 -18.5996 c4.59961 -3.7998 5.7998 -10.5 2.7998 -15.7002l-8.2002 -14.2998c6.90039 -8 12.2998 -17.2998 15.9004 -27.4004h16.5c6 0 11.2002 -4.2998 12.2002 -10.2998c2 -12 2.09961 -24.5996 0 -37.0996c-1 -6 -6.2002 -10.4004 -12.2002 -10.4004h-16.5 c-3.60059 -10.0996 -9 -19.3994 -15.9004 -27.3994l8.2002 -14.3008c3 -5.19922 1.90039 -11.8994 -2.7998 -15.6992c-9.5 -7.90039 -20.4004 -14.2002 -32.1006 -18.6006c-5.69922 -2.09961 -12.0996 0.100586 -15.0996 5.40039l-8.2002 14.2998 c-10.3994 -1.90039 -21.2002 -1.90039 -31.7002 0zM501.6 315.8c38.5 -29.5996 82.4004 14.2998 52.8008 52.7998c-38.5 29.7002 -82.4004 -14.2998 -52.8008 -52.7998zM386.3 161.9l33.7002 -16.8008c10.0996 -5.7998 14.5 -18.0996 10.5 -29.0996 c-8.90039 -24.2002 -26.4004 -46.4004 -42.5996 -65.7998c-7.40039 -8.90039 -20.2002 -11.1006 -30.3008 -5.2998l-29.0996 16.7998c-16 -13.7002 -34.5996 -24.6006 -54.9004 -31.7002v-33.5996c0 -11.6006 -8.2998 -21.6006 -19.6992 -23.6006 c-24.6006 -4.2002 -50.4004 -4.39941 -75.9004 0c-11.5 2 -20 11.9004 -20 23.6006v33.5996c-20.2998 7.2002 -38.9004 18 -54.9004 31.7002l-29.0996 -16.7002c-10 -5.7998 -22.9004 -3.59961 -30.2998 5.2998c-16.2002 19.4004 -33.2998 41.6006 -42.2002 65.7002 c-4 10.9004 0.400391 23.2002 10.5 29.0996l33.2998 16.8008c-3.89941 20.8994 -3.89941 42.3994 0 63.3994l-33.2998 16.9004c-10.0996 5.7998 -14.5996 18.0996 -10.5 29c8.90039 24.2002 26 46.3994 42.2002 65.7998c7.39941 8.90039 20.2002 11.0996 30.2998 5.2998 l29.0996 -16.7998c16 13.7002 34.6006 24.5996 54.9004 31.7002v33.7002c0 11.5 8.2002 21.5 19.5996 23.5c24.6006 4.19922 50.5 4.39941 76 0.0996094c11.5 -2 20 -11.9004 20 -23.5996v-33.6006c20.3008 -7.2002 38.9004 -18 54.9004 -31.7002l29.0996 16.8008 c10 5.7998 22.9004 3.59961 30.3008 -5.30078c16.1992 -19.3994 33.1992 -41.5996 42.0996 -65.7998c4 -10.8994 0.0996094 -23.2002 -10 -29.0996l-33.7002 -16.7998c3.90039 -21 3.90039 -42.5 0 -63.5zM268.7 140.8c59.2002 77 -28.7002 164.9 -105.7 105.7 c-59.2002 -77 28.7002 -164.9 105.7 -105.7zM512.1 -41.9004l-8.19922 -14.2998c-3 -5.2998 -9.40039 -7.5 -15.1006 -5.39941c-11.7998 4.39941 -22.5996 10.6992 -32.0996 18.5996c-4.60059 3.7998 -5.7998 10.5 -2.7998 15.7002l8.19922 14.2998 c-6.89941 8 -12.2998 17.2998 -15.8994 27.4004h-16.5c-6 0 -11.2002 4.2998 -12.2002 10.2998c-2 12 -2.09961 24.5996 0 37.0996c1 6 6.2002 10.4004 12.2002 10.4004h16.5c3.59961 10.0996 9 19.3994 15.8994 27.3994l-8.19922 14.3008 c-3 5.19922 -1.90039 11.8994 2.7998 15.6992c9.5 7.90039 20.3994 14.2002 32.0996 18.6006c5.7002 2.09961 12.1006 -0.100586 15.1006 -5.40039l8.19922 -14.2998c10.5 1.90039 21.2002 1.90039 31.7002 0l8.2002 14.2998c3 5.2998 9.40039 7.5 15.0996 5.40039 c11.8008 -4.40039 22.6006 -10.7002 32.1006 -18.6006c4.59961 -3.7998 5.7998 -10.5 2.7998 -15.6992l-8.2002 -14.3008c6.90039 -8 12.2998 -17.2998 15.9004 -27.3994h16.5c6 0 11.2002 -4.2998 12.2002 -10.2998c2 -12 2.09961 -24.6006 0 -37.1006 c-1 -6 -6.2002 -10.3994 -12.2002 -10.3994h-16.5c-3.60059 -10.1006 -9 -19.4004 -15.9004 -27.4004l8.2002 -14.2998c3 -5.2002 1.90039 -11.9004 -2.7998 -15.7002c-9.5 -7.90039 -20.4004 -14.2002 -32.1006 -18.5996 c-5.69922 -2.10059 -12.0996 0.0996094 -15.0996 5.39941l-8.2002 14.2998c-10.3994 -1.89941 -21.2002 -1.89941 -31.7002 0zM501.6 17c38.5 -29.5996 82.4004 14.2998 52.8008 52.7998c-38.5 29.6006 -82.4004 -14.2998 -52.8008 -52.7998z"/></svg>
<span id="t42" class="t " style="left:1483.75px;top:1112.61px;font-size:32px;line-height:32px;color:#d1cdc7;letter-spacing:0.22px;">Exported</span>
<span id="t43" class="t " style="left:1483.75px;top:1160.91px;font-size:32px;line-height:32px;color:#d1cdc7;">Services</span>
<span id="t44" class="t " style="left:1483.75px;top:1208.71px;font-size:32px;line-height:32px;color:#d1cdc7;font-weight:700;transform:scaleX(1.0957);transform-origin:0 0;">24</span>
<div class="b tile" style="left:2042.5px;top:754px;width:705.75px;height:284px;background:#987200;border-radius:8px;overflow:hidden;box-shadow:0 0 2px rgba(0,0,0,.25),0 2px 6px rgba(0,0,0,.3);"><div class="tf"></div></div>
<svg class="ic" style="left:2578.25px;top:794px;" width="140" height="140" viewBox="0 -448 512 512"><path fill="rgba(255,255,255,.135)" transform="scale(1,-1)" d="M216 188c0 -15.4639 -12.5361 -28 -28 -28s-28 12.5361 -28 28c0 44.1123 35.8877 80 80 80s80 -35.8877 80 -80c0 -15.4639 -12.5361 -28 -28 -28s-28 12.5361 -28 28c0 13.2344 -10.7666 24 -24 24s-24 -10.7656 -24 -24zM240 364c97.0469 0 176 -78.9531 176 -176 c0 -95.9863 -71.4053 -109.798 -72 -144.226c-0.124023 -59.4463 -48.5254 -107.774 -108 -107.774c-15.4639 0 -28 12.5361 -28 28s12.5361 28 28 28c28.6729 0 52 23.3271 52 52l0.00292969 0.37793c0.988281 73.3115 71.9971 68.458 71.9971 143.622 c0 66.168 -53.832 120 -120 120s-120 -53.832 -120 -120c0 -15.4639 -12.5361 -28 -28 -28s-28 12.5361 -28 28c0 97.0469 78.9531 176 176 176zM160 128c17.6729 0 32 -14.3271 32 -32s-14.3271 -32 -32 -32s-32 14.3271 -32 32s14.3271 32 32 32zM32 0 c17.6729 0 32 -14.3271 32 -32s-14.3271 -32 -32 -32s-32 14.3271 -32 32s14.3271 32 32 32zM512 187.993c0 -15.4639 -12.5371 -28 -28.001 -28s-28 12.5361 -28 28c0 1.12695 -0.00683594 2.24512 -0.0332031 3.36328l-0.00292969 0.1875 c-1.4668 91.4404 -60.1709 172.599 -146.077 201.953c-14.6318 5.00098 -22.4414 20.917 -17.4414 35.5498c5.00098 14.6328 20.917 22.4404 35.5498 17.4424c108.163 -36.959 182.082 -139.015 183.961 -253.965c0.0332031 -1.50684 0.0449219 -3.01367 0.0449219 -4.53125 zM152.971 8.9707l-33.9404 -33.9404l-80 80l33.9404 33.9404z"/></svg>
<span id="t45" class="t " style="left:2063.5px;top:784.01px;font-size:70.4px;line-height:70.4px;color:#d1cdc7;font-weight:700;transform:scaleX(1.0779);transform-origin:0 0;">24</span>
<span id="t46" class="t " style="left:2063.5px;top:886.91px;font-size:32px;line-height:32px;color:#d1cdc7;transform:scaleX(0.8933);transform-origin:0 0;">RECEIVERS</span>
<span id="t47" class="t " style="left:2340.38px;top:992.91px;font-size:32px;line-height:32px;color:#d1cdc7;letter-spacing:0.07px;">View</span>
<svg class="ic" style="left:2417.88px;top:992px;" width="32" height="32" viewBox="0 -448 512 512"><path fill="#d1cdc7" transform="scale(1,-1)" d="M504 192c0 -137 -111 -248 -248 -248s-248 111 -248 248s111 248 248 248s248 -111 248 -248zM360.4 220.9l-72.4004 -75.5v182.6c0 13.2998 -10.7002 24 -24 24h-16c-13.2998 0 -24 -10.7002 -24 -24v-182.6l-72.4004 75.5 c-9.2998 9.69922 -24.7998 9.89941 -34.2998 0.399414l-10.8994 -11c-9.40039 -9.39941 -9.40039 -24.5996 0 -33.8994l132.6 -132.7c9.40039 -9.40039 24.5996 -9.40039 33.9004 0l132.699 132.7c9.40039 9.39941 9.40039 24.5996 0 33.8994l-10.8994 11 c-9.5 9.5 -25 9.2998 -34.2998 -0.399414z"/></svg>
<div class="b ibox" style="left:2042.5px;top:1077.5px;width:705.75px;height:196px;background:#171b1c;border-radius:8px;box-shadow:0 0 2px rgba(0,0,0,.22),0 2px 6px rgba(0,0,0,.28);"></div>
<div class="b ibi" style="left:2058.5px;top:1093.5px;width:140px;height:164px;background:#987200;border-radius:8px;"></div>
<svg class="ic" style="left:2098.5px;top:1145.5px;" width="60" height="60" viewBox="0 -448 512 512"><path fill="#d1cdc7" transform="scale(1,-1)" d="M216 188c0 -15.4639 -12.5361 -28 -28 -28s-28 12.5361 -28 28c0 44.1123 35.8877 80 80 80s80 -35.8877 80 -80c0 -15.4639 -12.5361 -28 -28 -28s-28 12.5361 -28 28c0 13.2344 -10.7666 24 -24 24s-24 -10.7656 -24 -24zM240 364c97.0469 0 176 -78.9531 176 -176 c0 -95.9863 -71.4053 -109.798 -72 -144.226c-0.124023 -59.4463 -48.5254 -107.774 -108 -107.774c-15.4639 0 -28 12.5361 -28 28s12.5361 28 28 28c28.6729 0 52 23.3271 52 52l0.00292969 0.37793c0.988281 73.3115 71.9971 68.458 71.9971 143.622 c0 66.168 -53.832 120 -120 120s-120 -53.832 -120 -120c0 -15.4639 -12.5361 -28 -28 -28s-28 12.5361 -28 28c0 97.0469 78.9531 176 176 176zM160 128c17.6729 0 32 -14.3271 32 -32s-14.3271 -32 -32 -32s-32 14.3271 -32 32s14.3271 32 32 32zM32 0 c17.6729 0 32 -14.3271 32 -32s-14.3271 -32 -32 -32s-32 14.3271 -32 32s14.3271 32 32 32zM512 187.993c0 -15.4639 -12.5371 -28 -28.001 -28s-28 12.5361 -28 28c0 1.12695 -0.00683594 2.24512 -0.0332031 3.36328l-0.00292969 0.1875 c-1.4668 91.4404 -60.1709 172.599 -146.077 201.953c-14.6318 5.00098 -22.4414 20.917 -17.4414 35.5498c5.00098 14.6328 20.917 22.4404 35.5498 17.4424c108.163 -36.959 182.082 -139.015 183.961 -253.965c0.0332031 -1.50684 0.0449219 -3.01367 0.0449219 -4.53125 zM152.971 8.9707l-33.9404 -33.9404l-80 80l33.9404 33.9404z"/></svg>
<span id="t48" class="t " style="left:2219.5px;top:1112.61px;font-size:32px;line-height:32px;color:#d1cdc7;letter-spacing:0.22px;">Exported</span>
<span id="t49" class="t " style="left:2219.5px;top:1160.91px;font-size:32px;line-height:32px;color:#d1cdc7;letter-spacing:-0.31px;">Receivers</span>
<span id="t50" class="t " style="left:2219.5px;top:1208.71px;font-size:32px;line-height:32px;color:#d1cdc7;font-weight:700;letter-spacing:-0.79px;">15</span>
<div class="b tile" style="left:2778.25px;top:754px;width:705.75px;height:284px;background:#a71d2a;border-radius:8px;overflow:hidden;box-shadow:0 0 2px rgba(0,0,0,.25),0 2px 6px rgba(0,0,0,.3);"><div class="tf"></div></div>
<svg class="ic" style="left:3331.5px;top:794px;" width="122.5" height="140" viewBox="0 -448 448 512"><path fill="rgba(255,255,255,.135)" transform="scale(1,-1)" d="M448 374.857v-45.7148c0 -40.2852 -100.333 -73.1426 -224 -73.1426s-224 32.8574 -224 73.1426v45.7148c0 40.2852 100.333 73.1426 224 73.1426s224 -32.8574 224 -73.1426zM448 272v-102.857c0 -40.2852 -100.333 -73.1426 -224 -73.1426s-224 32.8574 -224 73.1426 v102.857c48.125 -33.1426 136.208 -48.5723 224 -48.5723s175.874 15.4297 224 48.5723zM448 112v-102.857c0 -40.2852 -100.333 -73.1426 -224 -73.1426s-224 32.8574 -224 73.1426v102.857c48.125 -33.1426 136.208 -48.5723 224 -48.5723s175.874 15.4297 224 48.5723z "/></svg>
<span id="t51" class="t " style="left:2799.25px;top:784.01px;font-size:70.4px;line-height:70.4px;color:#e8e6e3;font-weight:700;transform:scaleX(1.1303);transform-origin:0 0;">46</span>
<span id="t52" class="t " style="left:2799.25px;top:886.91px;font-size:32px;line-height:32px;color:#e8e6e3;transform:scaleX(0.9110);transform-origin:0 0;">PROVIDERS</span>
<span id="t53" class="t " style="left:3076.12px;top:992.91px;font-size:32px;line-height:32px;color:#e8e6e3;letter-spacing:0.07px;">View</span>
<svg class="ic" style="left:3153.62px;top:992px;" width="32" height="32" viewBox="0 -448 512 512"><path fill="#e8e6e3" transform="scale(1,-1)" d="M504 192c0 -137 -111 -248 -248 -248s-248 111 -248 248s111 248 248 248s248 -111 248 -248zM360.4 220.9l-72.4004 -75.5v182.6c0 13.2998 -10.7002 24 -24 24h-16c-13.2998 0 -24 -10.7002 -24 -24v-182.6l-72.4004 75.5 c-9.2998 9.69922 -24.7998 9.89941 -34.2998 0.399414l-10.8994 -11c-9.40039 -9.39941 -9.40039 -24.5996 0 -33.8994l132.6 -132.7c9.40039 -9.40039 24.5996 -9.40039 33.9004 0l132.699 132.7c9.40039 9.39941 9.40039 24.5996 0 33.8994l-10.8994 11 c-9.5 9.5 -25 9.2998 -34.2998 -0.399414z"/></svg>
<div class="b ibox" style="left:2778.25px;top:1077.5px;width:705.75px;height:196px;background:#171b1c;border-radius:8px;box-shadow:0 0 2px rgba(0,0,0,.22),0 2px 6px rgba(0,0,0,.28);"></div>
<div class="b ibi" style="left:2794.25px;top:1093.5px;width:140px;height:164px;background:#a71d2a;border-radius:8px;"></div>
<svg class="ic" style="left:2838px;top:1145.5px;" width="52.5" height="60" viewBox="0 -448 448 512"><path fill="#e8e6e3" transform="scale(1,-1)" d="M448 374.857v-45.7148c0 -40.2852 -100.333 -73.1426 -224 -73.1426s-224 32.8574 -224 73.1426v45.7148c0 40.2852 100.333 73.1426 224 73.1426s224 -32.8574 224 -73.1426zM448 272v-102.857c0 -40.2852 -100.333 -73.1426 -224 -73.1426s-224 32.8574 -224 73.1426 v102.857c48.125 -33.1426 136.208 -48.5723 224 -48.5723s175.874 15.4297 224 48.5723zM448 112v-102.857c0 -40.2852 -100.333 -73.1426 -224 -73.1426s-224 32.8574 -224 73.1426v102.857c48.125 -33.1426 136.208 -48.5723 224 -48.5723s175.874 15.4297 224 48.5723z "/></svg>
<span id="t54" class="t " style="left:2955.25px;top:1112.61px;font-size:32px;line-height:32px;color:#d1cdc7;letter-spacing:0.22px;">Exported</span>
<span id="t55" class="t " style="left:2955.25px;top:1160.91px;font-size:32px;line-height:32px;color:#d1cdc7;letter-spacing:0.07px;">Providers</span>
<span id="t56" class="t " style="left:2955.25px;top:1208.71px;font-size:32px;line-height:32px;color:#d1cdc7;font-weight:700;transform:scaleX(0.9946);transform-origin:0 0;">7</span>
<svg class="ic" style="left:571px;top:1426px;" width="32" height="32" viewBox="0 -448 512 512"><path fill="#d1cdc7" transform="scale(1,-1)" d="M487.4 132.3c4.89941 -2.7998 7.09961 -8.59961 5.59961 -14.0996c-11.0996 -35.7002 -30 -67.9004 -54.7002 -94.6006c-3.7998 -4.19922 -9.89941 -5.09961 -14.7998 -2.2998l-42.5996 24.6006c-18 -15.3008 -38.6006 -27.2002 -60.8008 -35.1006v-49.2002 c0 -5.59961 -3.89941 -10.5 -9.39941 -11.6992c-34.9004 -7.80078 -72.5 -8.2002 -109.2 0c-5.5 1.19922 -9.40039 6.09961 -9.40039 11.6992v49.2002c-22.2998 7.7998 -42.8994 19.7002 -60.7998 35.1006l-42.5996 -24.6006c-4.7998 -2.7998 -11 -1.7998 -14.7998 2.2998 c-24.7002 26.8008 -43.6006 59 -54.7002 94.6006c-1.60059 5.39941 0.599609 11.2002 5.5 14l42.5996 24.5996c-4.2998 23.2002 -4.2998 47 0 70.2002l-42.5996 24.5996c-4.90039 2.80078 -7.2002 8.60059 -5.5 14c11.0996 35.7002 30 67.9004 54.7002 94.6006 c3.7998 4.2002 9.89941 5.09961 14.7998 2.2998l42.5 -24.5996c18 15.2998 38.5996 27.1992 60.7998 35.0996v49.2002c0 5.59961 3.90039 10.5 9.40039 11.7002c34.8994 7.7998 72.5 8.19922 109.199 0c5.5 -1.2002 9.40039 -6.10059 9.40039 -11.7002v-49.1006 c22.2998 -7.7998 42.9004 -19.6992 60.7998 -35.0996l42.6006 24.5996c4.7998 2.80078 11 1.80078 14.7998 -2.2998c24.7002 -26.7998 43.5996 -59 54.7002 -94.5996c1.59961 -5.40039 -0.600586 -11.2002 -5.5 -14l-42.6006 -24.6006 c4.2998 -23.1992 4.2998 -47 0 -70.1992zM256 112c44.0996 0 80 35.9004 80 80s-35.9004 80 -80 80s-80 -35.9004 -80 -80s35.9004 -80 80 -80z"/></svg>
<span id="t57" class="t " style="left:612.3px;top:1426.91px;font-size:32px;line-height:32px;color:#d1cdc7;font-weight:700;letter-spacing:-0.15px;">SCAN OPTIONS</span>
<div class="b btn" style="left:571px;top:1498px;width:198.7px;height:75.5px;background:#128293;border:2px solid #1594a8;border-radius:8px;box-sizing:border-box;"></div>
<svg class="ic" style="left:597px;top:1520px;" width="32" height="32" viewBox="0 -448 512 512"><path fill="#e8e6e3" transform="scale(1,-1)" d="M440.65 435.43c-0.00976562 0.192383 -0.0136719 0.375977 -0.0136719 0.570312c0 6.62109 5.37305 11.9961 11.9932 12h47.3701c6.62305 0 12 -5.37695 12 -12v-200.35c0 -6.62305 -5.37695 -12 -12 -12h-200.22c-6.62305 0 -12 5.37695 -12 12v47.4092 c0 0.00488281 -0.00878906 0.00976562 -0.00878906 0.0136719c0 6.62305 5.37695 12 12 12c0.194336 0 0.386719 -0.00390625 0.578125 -0.0136719l101.46 -4.85938c-31.5938 46.9941 -85.1406 77.6738 -145.973 77.6738c-82.8662 0 -152.428 -57.4229 -171.027 -134.614 c-1.24219 -5.29688 -5.99707 -9.25391 -11.6699 -9.25977h-49.0498c-6.62305 0 -12 5.36719 -12 11.9893c0 0.748047 0.0693359 1.48047 0.200195 2.19043c21.6201 114.9 122.44 201.82 243.54 201.82c0.0966797 0 0.123047 0.141602 0.219727 0.141602 c75.5615 0 143.248 -33.9814 188.601 -87.4814zM255.83 16c0.015625 0 0.0185547 0.0898438 0.0332031 0.0898438c82.8701 0 152.43 57.4434 170.997 134.65c1.24219 5.29688 5.99707 9.25391 11.6699 9.25977h49.0498c6.62305 0 12 -5.36719 12 -11.9893 c0 -0.748047 -0.0693359 -1.48047 -0.200195 -2.19043c-21.6201 -114.9 -122.439 -201.82 -243.55 -201.82c-0.0800781 0 -0.0908203 -0.140625 -0.170898 -0.140625c-75.4814 0 -143.106 33.9082 -188.459 87.3105l4.14941 -82.5703 c0.0107422 -0.201172 0.015625 -0.395508 0.015625 -0.599609c0 -6.62305 -5.37695 -12 -12 -12h-0.015625h-47.3496c-6.62305 0 -12 5.37695 -12 12v200.33c0 6.62305 5.37695 12 12 12h200.2c6.62305 0 12 -5.37695 12 -12v-47.4004 c0 -0.00390625 0.0078125 -0.00878906 0.0078125 -0.0136719c0 -6.62305 -5.37695 -12 -12 -12c-0.193359 0 -0.386719 0.00488281 -0.578125 0.0136719l-101.8 4.87012c31.5254 -47.0088 85.0449 -77.7998 145.847 -77.7998h0.15332z"/></svg>
<span id="t58" class="t " style="left:638.5px;top:1520.91px;font-size:32px;line-height:32px;color:#e8e6e3;letter-spacing:-0.68px;">Rescan</span>
<div class="b btn" style="left:779px;top:1498px;width:415px;height:75.5px;background:#0062cc;border:2px solid #0062cc;border-radius:8px;box-sizing:border-box;"></div>
<svg class="ic" style="left:805px;top:1520px;" width="32" height="32" viewBox="0 -448 512 512"><path fill="#e8e6e3" transform="scale(1,-1)" d="M80 80c8.83105 0 16 -7.16895 16 -16v-64c0 -8.83105 -7.16895 -16 -16 -16h-64c-8.83105 0 -16 7.16895 -16 16v64c0 8.83105 7.16895 16 16 16h64zM80 400c8.83105 0 16 -7.16895 16 -16v-64c0 -8.83105 -7.16895 -16 -16 -16h-64c-8.83105 0 -16 7.16895 -16 16v64 c0 8.83105 7.16895 16 16 16h64zM80 240c8.83105 0 16 -7.16895 16 -16v-64c0 -8.83105 -7.16895 -16 -16 -16h-64c-8.83105 0 -16 7.16895 -16 16v64c0 8.83105 7.16895 16 16 16h64zM496 64c8.83105 0 16 -7.16895 16 -16v-32c0 -8.83105 -7.16895 -16 -16 -16h-320 c-8.83105 0 -16 7.16895 -16 16v32c0 8.83105 7.16895 16 16 16h320zM496 384c8.83105 0 16 -7.16895 16 -16v-32c0 -8.83105 -7.16895 -16 -16 -16h-320c-8.83105 0 -16 7.16895 -16 16v32c0 8.83105 7.16895 16 16 16h320zM496 224c8.83105 0 16 -7.16895 16 -16v-32 c0 -8.83105 -7.16895 -16 -16 -16h-320c-8.83105 0 -16 7.16895 -16 16v32c0 8.83105 7.16895 16 16 16h320z"/></svg>
<span id="t59" class="t " style="left:847px;top:1520.91px;font-size:32px;line-height:32px;color:#e8e6e3;letter-spacing:0.09px;">Manage Suppressions</span>
<div class="b btn" style="left:571px;top:1606px;width:428px;height:75.5px;background:#208637;border:2px solid #23913b;border-radius:8px;box-sizing:border-box;"></div>
<svg class="ic" style="left:597px;top:1628px;" width="32" height="32" viewBox="0 -448 512 512"><path fill="#e8e6e3" transform="scale(1,-1)" d="M256 440c137 0 248 -111 248 -248s-111 -248 -248 -248s-248 111 -248 248s111 248 248 248zM371.7 168c16.3994 9.09961 16.3994 32.7998 0 42l-176 107c-15.9004 8.7998 -35.7002 -2.59961 -35.7002 -21v-208c0 -18.5 19.9004 -29.7998 35.7002 -21z"/></svg>
<span id="t60" class="t " style="left:638.5px;top:1628.91px;font-size:32px;line-height:32px;color:#e8e6e3;letter-spacing:0.33px;">Start Dynamic Analysis</span>
<svg class="ic" style="left:1578px;top:1426px;" width="24" height="32" viewBox="0 -448 384 512"><path fill="#d1cdc7" transform="scale(1,-1)" d="M384 326.059v-6.05859h-128v128h6.05859c6.36523 0 12.4707 -2.5293 16.9717 -7.0293l97.9404 -97.9404c4.34375 -4.34473 7.0293 -10.3486 7.0293 -16.9717zM248 288h136v-328c0 -13.2549 -10.7451 -24 -24 -24h-336c-13.2549 0 -24 10.7451 -24 24v464 c0 13.2549 10.7451 24 24 24h200v-136c0 -13.2002 10.7998 -24 24 -24zM123.206 47.4951l19.5791 20.8838c0.905273 0.96582 1.46289 2.26562 1.46289 3.69238c0 1.61426 -0.709961 3.06445 -1.83496 4.05469l-40.7627 35.874l40.7627 35.874 c1.125 0.990234 1.83203 2.44043 1.83203 4.05566c0 1.42676 -0.554688 2.72559 -1.45996 3.69141l-19.5791 20.8848c-0.985352 1.05176 -2.3877 1.70703 -3.94141 1.70703c-1.42676 0 -2.72559 -0.555664 -3.69141 -1.46094l-64.8662 -60.8115 c-1.05078 -0.986328 -1.70801 -2.38672 -1.70801 -3.93945c0 -1.55371 0.657227 -2.9541 1.70801 -3.94043l64.8662 -60.8115c0.96582 -0.905273 2.26562 -1.46289 3.69336 -1.46289c1.55273 0 2.9541 0.657227 3.93945 1.70898zM174.501 -2.98438 c0.478516 -0.138672 0.982422 -0.212891 1.50488 -0.212891c2.45801 0 4.53418 1.64551 5.18555 3.89453l61.4395 211.626c0.138672 0.478516 0.213867 0.982422 0.213867 1.50488c0 2.45801 -1.64551 4.53418 -3.89355 5.18652l-27.4521 7.9707 c-0.477539 0.138672 -0.981445 0.212891 -1.50391 0.212891c-2.45801 0 -4.53516 -1.64551 -5.18848 -3.89453l-61.4395 -211.626c-0.138672 -0.477539 -0.212891 -0.981445 -0.212891 -1.50293c0 -2.45898 1.64551 -4.53516 3.89355 -5.18848zM335.293 108.061 c1.05176 0.986328 1.70898 2.38672 1.70898 3.94043c0 1.55273 -0.657227 2.95312 -1.70801 3.93945l-64.8662 60.8115c-0.96582 0.905273 -2.26562 1.46289 -3.69336 1.46289c-1.55273 0 -2.9541 -0.657227 -3.93945 -1.70898l-19.5801 -20.8848 c-0.905273 -0.96582 -1.46289 -2.26562 -1.46289 -3.69238c0 -1.61426 0.709961 -3.06445 1.83496 -4.05469l40.7627 -35.874l-40.7637 -35.873c-1.125 -0.990234 -1.83203 -2.44043 -1.83203 -4.05566c0 -1.42676 0.554688 -2.72559 1.45996 -3.69141l19.5801 -20.8848 c0.985352 -1.05176 2.3877 -1.70703 3.94141 -1.70703c1.42676 0 2.72559 0.555664 3.69141 1.46094z"/></svg>
<span id="t61" class="t " style="left:1612px;top:1426.91px;font-size:32px;line-height:32px;color:#d1cdc7;font-weight:700;letter-spacing:-0.59px;">DECOMPILED CODE</span>
<div class="b btn" style="left:1578px;top:1498px;width:474.6px;height:75.5px;background:#0062cc;border:2px solid #0062cc;border-radius:8px;box-sizing:border-box;"></div>
<svg class="ic" style="left:1604px;top:1520px;" width="36" height="32" viewBox="0 -448 576 512"><path fill="#e8e6e3" transform="scale(1,-1)" d="M572.52 206.6c2.21387 -4.37793 3.46094 -9.38965 3.46094 -14.626c0 -5.2373 -1.24707 -10.1855 -3.46094 -14.5635c-54.1992 -105.771 -161.59 -177.41 -284.52 -177.41s-230.29 71.5898 -284.52 177.4c-2.21387 4.37793 -3.46094 9.38965 -3.46094 14.626 c0 5.2373 1.24707 10.1855 3.46094 14.5635c54.1992 105.771 161.59 177.41 284.52 177.41s230.29 -71.5898 284.52 -177.4zM288 48c0.0234375 0 0.0458984 -0.000976562 0.0703125 -0.000976562c79.4365 0 143.93 64.4922 143.93 143.93v0.0712891 c0 79.4756 -64.5244 144 -144 144s-144 -64.5244 -144 -144s64.5244 -144 144 -144zM288 288c0.0761719 0 0.160156 -0.0273438 0.237305 -0.0273438c52.8623 0 95.7803 -42.917 95.7803 -95.7793s-42.918 -95.7803 -95.7803 -95.7803s-95.7803 42.918 -95.7803 95.7803 c0 8.68945 1.16016 17.1104 3.33301 25.1162c7.93164 -5.83594 17.7432 -9.26758 28.3359 -9.26758c26.4092 0 47.8496 21.4404 47.8496 47.8496c0 10.5938 -3.44922 20.3867 -9.28516 28.3184c8.0459 2.34277 16.541 3.66797 25.3096 3.79004z"/></svg>
<span id="t62" class="t " style="left:1650px;top:1520.91px;font-size:32px;line-height:32px;color:#e8e6e3;letter-spacing:0.48px;">View AndroidManifest.xml</span>
<div class="b btn" style="left:2062.2px;top:1498px;width:281.6px;height:75.5px;background:#128293;border:2px solid #1594a8;border-radius:8px;box-sizing:border-box;"></div>
<svg class="ic" style="left:2088px;top:1520px;" width="40" height="32" viewBox="0 -448 640 512"><path fill="#e8e6e3" transform="scale(1,-1)" d="M278.9 -63.5l-61 17.7002c-6.40039 1.7998 -10 8.5 -8.2002 14.8994l136.5 470.2c1.7998 6.40039 8.5 10 14.8994 8.2002l61 -17.7002c6.40039 -1.7998 10 -8.5 8.2002 -14.8994l-136.5 -470.2c-1.89941 -6.40039 -8.5 -10.1006 -14.8994 -8.2002zM164.9 48.7002 c-4.5 -4.90039 -12.1006 -5.10059 -17 -0.5l-144.101 135.1c-5.09961 4.7002 -5.09961 12.7998 0 17.5l144.101 135c4.89941 4.60059 12.5 4.2998 17 -0.5l43.5 -46.3994c4.69922 -4.90039 4.2998 -12.7002 -0.800781 -17.2002l-90.5996 -79.7002l90.5996 -79.7002 c5.10059 -4.5 5.40039 -12.2998 0.800781 -17.2002zM492.1 48.0996c-4.89941 -4.5 -12.5 -4.2998 -17 0.600586l-43.5 46.3994c-4.69922 4.90039 -4.2998 12.7002 0.800781 17.2002l90.5996 79.7002l-90.5996 79.7998c-5.10059 4.5 -5.40039 12.2998 -0.800781 17.2002 l43.5 46.4004c4.60059 4.7998 12.2002 5 17 0.5l144.101 -135.2c5.09961 -4.7002 5.09961 -12.7998 0 -17.5z"/></svg>
<span id="t63" class="t " style="left:2138.4px;top:1520.91px;font-size:32px;line-height:32px;color:#e8e6e3;letter-spacing:0.01px;">View Source</span>
<div class="b btn" style="left:2352.9px;top:1498px;width:258.9px;height:75.5px;background:#128293;border:2px solid #1594a8;border-radius:8px;box-sizing:border-box;"></div>
<svg class="ic" style="left:2379px;top:1520px;" width="40" height="32" viewBox="0 -448 640 512"><path fill="#e8e6e3" transform="scale(1,-1)" d="M278.9 -63.5l-61 17.7002c-6.40039 1.7998 -10 8.5 -8.2002 14.8994l136.5 470.2c1.7998 6.40039 8.5 10 14.8994 8.2002l61 -17.7002c6.40039 -1.7998 10 -8.5 8.2002 -14.8994l-136.5 -470.2c-1.89941 -6.40039 -8.5 -10.1006 -14.8994 -8.2002zM164.9 48.7002 c-4.5 -4.90039 -12.1006 -5.10059 -17 -0.5l-144.101 135.1c-5.09961 4.7002 -5.09961 12.7998 0 17.5l144.101 135c4.89941 4.60059 12.5 4.2998 17 -0.5l43.5 -46.3994c4.69922 -4.90039 4.2998 -12.7002 -0.800781 -17.2002l-90.5996 -79.7002l90.5996 -79.7002 c5.10059 -4.5 5.40039 -12.2998 0.800781 -17.2002zM492.1 48.0996c-4.89941 -4.5 -12.5 -4.2998 -17 0.600586l-43.5 46.3994c-4.69922 4.90039 -4.2998 12.7002 0.800781 17.2002l90.5996 79.7002l-90.5996 79.7998c-5.10059 4.5 -5.40039 12.2998 -0.800781 17.2002 l43.5 46.4004c4.60059 4.7998 12.2002 5 17 0.5l144.101 -135.2c5.09961 -4.7002 5.09961 -12.7998 0 -17.5z"/></svg>
<span id="t64" class="t " style="left:2429.6px;top:1520.91px;font-size:32px;line-height:32px;color:#e8e6e3;letter-spacing:-0.14px;">View Smali</span>
<div class="b btn" style="left:1578px;top:1606px;width:398.9px;height:75.5px;background:#987200;border:2px solid #ad8200;border-radius:8px;box-sizing:border-box;"></div>
<svg class="ic" style="left:1604px;top:1628px;" width="32" height="32" viewBox="0 -448 512 512"><path fill="#d3cfc9" transform="scale(1,-1)" d="M216 448h80c13.2998 0 24 -10.7002 24 -24v-168h87.7002c17.7998 0 26.7002 -21.5 14.0996 -34.0996l-152.1 -152.2c-7.5 -7.5 -19.7998 -7.5 -27.2998 0l-152.301 152.2c-12.5996 12.5996 -3.69922 34.0996 14.1006 34.0996h87.7998v168c0 13.2998 10.7002 24 24 24z M512 72v-112c0 -13.2998 -10.7002 -24 -24 -24h-464c-13.2998 0 -24 10.7002 -24 24v112c0 13.2998 10.7002 24 24 24h146.7l49 -49c20.0996 -20.0996 52.5 -20.0996 72.5996 0l49 49h146.7c13.2998 0 24 -10.7002 24 -24zM388 -16c0 11 -9 20 -20 20s-20 -9 -20 -20 s9 -20 20 -20s20 9 20 20zM452 -16c0 11 -9 20 -20 20s-20 -9 -20 -20s9 -20 20 -20s20 9 20 20z"/></svg>
<span id="t65" class="t " style="left:1646.4px;top:1628.91px;font-size:32px;line-height:32px;color:#d3cfc9;letter-spacing:0.01px;">Download Java Code</span>
<div class="b btn" style="left:1986px;top:1606px;width:411.8px;height:75.5px;background:#987200;border:2px solid #ad8200;border-radius:8px;box-sizing:border-box;"></div>
<svg class="ic" style="left:2012px;top:1628px;" width="32" height="32" viewBox="0 -448 512 512"><path fill="#d3cfc9" transform="scale(1,-1)" d="M216 448h80c13.2998 0 24 -10.7002 24 -24v-168h87.7002c17.7998 0 26.7002 -21.5 14.0996 -34.0996l-152.1 -152.2c-7.5 -7.5 -19.7998 -7.5 -27.2998 0l-152.301 152.2c-12.5996 12.5996 -3.69922 34.0996 14.1006 34.0996h87.7998v168c0 13.2998 10.7002 24 24 24z M512 72v-112c0 -13.2998 -10.7002 -24 -24 -24h-464c-13.2998 0 -24 10.7002 -24 24v112c0 13.2998 10.7002 24 24 24h146.7l49 -49c20.0996 -20.0996 52.5 -20.0996 72.5996 0l49 49h146.7c13.2998 0 24 -10.7002 24 -24zM388 -16c0 11 -9 20 -20 20s-20 -9 -20 -20 s9 -20 20 -20s20 9 20 20zM452 -16c0 11 -9 20 -20 20s-20 -9 -20 -20s9 -20 20 -20s20 9 20 20z"/></svg>
<span id="t66" class="t " style="left:2054px;top:1628.91px;font-size:32px;line-height:32px;color:#d3cfc9;letter-spacing:0.06px;">Download Smali Code</span>
<div class="b btn" style="left:2406.9px;top:1606px;width:307.8px;height:75.5px;background:#987200;border:2px solid #ad8200;border-radius:8px;box-sizing:border-box;"></div>
<svg class="ic" style="left:2433px;top:1628px;" width="32" height="32" viewBox="0 -448 512 512"><path fill="#d3cfc9" transform="scale(1,-1)" d="M216 448h80c13.2998 0 24 -10.7002 24 -24v-168h87.7002c17.7998 0 26.7002 -21.5 14.0996 -34.0996l-152.1 -152.2c-7.5 -7.5 -19.7998 -7.5 -27.2998 0l-152.301 152.2c-12.5996 12.5996 -3.69922 34.0996 14.1006 34.0996h87.7998v168c0 13.2998 10.7002 24 24 24z M512 72v-112c0 -13.2998 -10.7002 -24 -24 -24h-464c-13.2998 0 -24 10.7002 -24 24v112c0 13.2998 10.7002 24 24 24h146.7l49 -49c20.0996 -20.0996 52.5 -20.0996 72.5996 0l49 49h146.7c13.2998 0 24 -10.7002 24 -24zM388 -16c0 11 -9 20 -20 20s-20 -9 -20 -20 s9 -20 20 -20s20 9 20 20zM452 -16c0 11 -9 20 -20 20s-20 -9 -20 -20s9 -20 20 -20s20 9 20 20z"/></svg>
<span id="t67" class="t " style="left:2475px;top:1628.91px;font-size:32px;line-height:32px;color:#d3cfc9;">Download APK</span>
<svg class="ic" style="left:571px;top:1833px;" width="32" height="32" viewBox="0 -448 512 512"><path fill="#d1cdc7" transform="scale(1,-1)" d="M458.622 192.08l45.9844 -45.0039c13.7012 -12.9727 7.32227 -36.0371 -10.6641 -40.3389l-62.6504 -15.9902l17.6611 -62.0146c4.99023 -17.834 -11.8252 -34.665 -29.6611 -29.6719l-61.9941 17.667l-15.9834 -62.6709 c-4.33887 -18.1533 -27.8252 -24.1553 -40.3252 -10.668l-44.9893 46.001l-44.9912 -46.001c-12.6289 -13.3496 -35.8857 -7.90625 -40.3252 10.668l-15.9834 62.6709l-61.9941 -17.667c-17.832 -4.99121 -34.6523 11.833 -29.6611 29.6719l17.6611 62.0146 l-62.6504 15.9902c-17.9795 4.2998 -24.3721 27.3613 -10.6641 40.3389l45.9854 45.0039l-45.9854 45.0049c-13.7012 12.9707 -7.32227 36.0371 10.665 40.3379l62.6504 15.9902l-17.6611 62.0146c-4.99023 17.834 11.8242 34.665 29.6611 29.6709l61.9951 -17.667 l15.9834 62.6709c4.27832 17.9023 27.6953 24.0195 40.3252 10.6689l44.9893 -46.3418l44.9902 46.3428c12.7744 13.5039 36.0947 7.03027 40.3252 -10.6689l15.9834 -62.6709l61.9941 17.667c17.832 4.99219 34.6523 -11.833 29.6611 -29.6709l-17.6611 -62.0146 l62.6504 -15.9902c17.9795 -4.2998 24.3721 -27.3623 10.6641 -40.3389z"/></svg>
<span id="t68" class="t " style="left:612.3px;top:1833.91px;font-size:32px;line-height:32px;color:#d1cdc7;font-weight:700;letter-spacing:-0.59px;">SIGNER CERTIFICATE</span>
<span id="t69" class="t " style="left:595px;top:1937.81px;font-size:28px;line-height:28px;color:#d1cdc7;font-family:'DejaVu Sans Mono','Liberation Mono',monospace;letter-spacing:-0.1px;">APK is signed</span>
</main>
<nav class="navbar">
<svg class="ic" style="left:548px;top:38.25px;" width="28" height="32" viewBox="0 -448 448 512"><path fill="#b0c8e2" transform="scale(1,-1)" d="M16 316c-8.83691 0 -16 7.16309 -16 16v40c0 8.83691 7.16309 16 16 16h416c8.83691 0 16 -7.16309 16 -16v-40c0 -8.83691 -7.16309 -16 -16 -16h-416zM16 156c-8.83691 0 -16 7.16309 -16 16v40c0 8.83691 7.16309 16 16 16h416c8.83691 0 16 -7.16309 16 -16v-40 c0 -8.83691 -7.16309 -16 -16 -16h-416zM16 -4c-8.83691 0 -16 7.16309 -16 16v40c0 8.83691 7.16309 16 16 16h416c8.83691 0 16 -7.16309 16 -16v-40c0 -8.83691 -7.16309 -16 -16 -16h-416z"/></svg>
<span id="t70" class="t " style="left:1290px;top:38.91px;font-size:32px;line-height:32px;color:#b0c8e2;transform:scaleX(0.9435);transform-origin:0 0;">RECENT SCANS</span>
<span id="t71" class="t " style="left:1591px;top:38.91px;font-size:32px;line-height:32px;color:#b0c8e2;letter-spacing:-0.69px;">STATIC ANALYZER</span>
<span id="t72" class="t " style="left:1929px;top:38.91px;font-size:32px;line-height:32px;color:#b0c8e2;letter-spacing:-0.68px;">DYNAMIC ANALYZER</span>
<span id="t73" class="t " style="left:2305px;top:38.91px;font-size:32px;line-height:32px;color:#b0c8e2;letter-spacing:-1.21px;">REST API</span>
<span id="t74" class="t " style="left:2506px;top:38.91px;font-size:32px;line-height:32px;color:#b0c8e2;transform:scaleX(0.9414);transform-origin:0 0;">DONATE</span>
<span id="t75" class="t " style="left:2734px;top:38.91px;font-size:32px;line-height:32px;color:#b0c8e2;transform:scaleX(0.9518);transform-origin:0 0;">DOCS</span>
<span id="t76" class="t " style="left:2887.6px;top:38.91px;font-size:32px;line-height:32px;color:#b0c8e2;letter-spacing:-0.96px;">ABOUT</span>
<svg class="ic" style="left:2641.5px;top:41.5px;" width="27" height="27" viewBox="0 -448 512 512"><path fill="#b0c8e2" transform="scale(1,-1)" d="M462.3 385.4c62.7998 -53.6006 66.1006 -149.801 9.7998 -207.9l-193.5 -199.8c-12.5 -12.9004 -32.7998 -12.9004 -45.2998 0l-193.5 199.8c-56.2002 58.0996 -52.8994 154.3 9.90039 207.9c54.7998 46.6992 136.399 38.2998 186.6 -13.6006l19.7002 -20.2998 l19.7002 20.2998c50.2998 51.9004 131.8 60.2998 186.6 13.6006z"/></svg>
<div class="b search" style="left:3059px;top:23px;width:479px;height:62px;background:#0353ab;border-radius:8px;"></div>
<span id="t77" class="t " style="left:3076px;top:41.6px;font-size:28px;line-height:28px;color:#4f86cb;letter-spacing:0.11px;">Search MD5</span>
<svg class="ic" style="left:3494px;top:40.6px;" width="28" height="28" viewBox="0 -448 512 512"><path fill="#9fbbe0" transform="scale(1,-1)" d="M505 5.2998c9.2998 -9.39941 9.2998 -24.5996 -0.0996094 -34l-28.3008 -28.2998c-9.2998 -9.40039 -24.5 -9.40039 -33.8994 0l-99.7002 99.7002c-4.5 4.5 -7 10.5996 -7 17v16.2998c-35.2998 -27.5996 -79.7002 -44 -128 -44c-114.9 0 -208 93.0996 -208 208 s93.0996 208 208 208s208 -93.0996 208 -208c0 -48.2998 -16.4004 -92.7002 -44 -128h16.2998c6.40039 0 12.5 -2.5 17 -7zM208 112c70.7998 0 128 57.2998 128 128c0 70.7998 -57.2998 128 -128 128c-70.7998 0 -128 -57.2998 -128 -128c0 -70.7998 57.2998 -128 128 -128z "/></svg>
</nav>
<aside class="sidebar">
<svg class="ic" style="left:49.2px;top:20.2px;" width="15.71" height="20" viewBox="0 -1536 1408 1792"><path fill="#c9c9c9" transform="scale(1,-1)" d="M493 1053q16 0 27.5 11.5t11.5 27.5t-11.5 27.5t-27.5 11.5t-27 -11.5t-11 -27.5t11 -27.5t27 -11.5zM915 1053q16 0 27 11.5t11 27.5t-11 27.5t-27 11.5t-27.5 -11.5t-11.5 -27.5t11.5 -27.5t27.5 -11.5zM103 869q42 0 72 -30t30 -72v-430q0 -43 -29.5 -73t-72.5 -30 t-73 30t-30 73v430q0 42 30 72t73 30zM1163 850v-666q0 -46 -32 -78t-77 -32h-75v-227q0 -43 -30 -73t-73 -30t-73 30t-30 73v227h-138v-227q0 -43 -30 -73t-73 -30q-42 0 -72 30t-30 73l-1 227h-74q-46 0 -78 32t-32 78v666h918zM931 1255q107 -55 171 -153.5t64 -215.5 h-925q0 117 64 215.5t172 153.5l-71 131q-7 13 5 20q13 6 20 -6l72 -132q95 42 201 42t201 -42l72 132q7 12 20 6q12 -7 5 -20zM1408 767v-430q0 -43 -30 -73t-73 -30q-42 0 -72 30t-30 73v430q0 43 30 72.5t72 29.5q43 0 73 -29.5t30 -72.5z"/></svg>
<svg class="ic" style="left:49.3px;top:39.8px;" width="15.45" height="20.6" viewBox="0 -448 384 512"><path fill="#c9c9c9" transform="scale(1,-1)" d="M318.7 179.3c0 -1.89941 -3.5 -61.2002 61.7002 -91.8994c-12.2002 -36.8008 -54 -118.601 -102.601 -119.301c-28.0996 0 -44.5996 17.9004 -76.3994 17.9004c-32.8008 0 -50.6006 -17.2998 -75.8008 -17.9004c-48.1992 -1.5 -94.3994 88.5 -107.199 125.2 c-9.60059 27.9336 -14.4004 55 -14.4004 81.2002c0 88.7002 59.2998 132.3 115.1 133.2c27 0 61.4004 -19.7002 76.4004 -19.7002c14.2002 0 53 23.5 88.5 20.7002c37.5 -2.90039 65.9004 -17.7002 84.7002 -44.6006c-33.6006 -20.3994 -50.2002 -48.0996 -50 -84.7998z M262.1 343.5c-19.5996 -22.9004 -43.3994 -36.2998 -69.5 -34.2998c-2.19922 27.5996 8.10059 52.0996 25.6006 71.8994c15.8994 18.5 43.7998 33.5 67.8994 34.9004c0.800781 -10.5996 3.30078 -40.0996 -24 -72.5z"/></svg>
<svg class="ic" style="left:49.8px;top:63.3px" width="15.5" height="17.4" viewBox="0 0 15.5 17.4"><path fill="#c9c9c9" d="M0,2.4L6.6,1.5V8.3H0zM7.6,1.3L15.5,0V8.3H7.6zM0,9.2H6.6V16L0,15.1zM7.6,9.2H15.5V17.4L7.6,16.2z"/></svg>
<svg class="ic" style="left:70px;top:24px" width="50" height="56" viewBox="0 0 50 56"><polyline points="3.6,52.1 3.6,4 25,33.6 46.1,4 46.1,52.1" fill="none" stroke="#cfcfcf" stroke-width="1.5" stroke-linejoin="miter"/></svg>
<span id="t78" class="t " style="left:135.2px;top:36.46px;font-size:37.5px;line-height:37.5px;color:#cac7c2;">|</span>
<span id="t79" class="t " style="left:155.6px;top:35.54px;font-size:40px;line-height:40px;color:#cac7c2;font-weight:700;letter-spacing:0.31px;">Mob</span>
<span id="t80" class="t " style="left:239px;top:35.54px;font-size:40px;line-height:40px;color:#cac7c2;transform:scaleX(0.8430);transform-origin:0 0;">SF</span>
<div class="b hr" style="left:0px;top:110px;width:500px;height:2px;background:#7a6f62;"></div>
<span id="t81" class="t " style="left:36.5px;top:163.21px;font-size:32px;line-height:32px;color:#cfcbc5;letter-spacing:0.38px;">Static Analyzer</span>
<div class="b hr" style="left:16px;top:243.8px;width:468px;height:1.6px;background:#7a6f62;"></div>
<svg class="ic" style="left:56.2px;top:299.4px;" width="35.2" height="35.2" viewBox="0 -448 512 512"><path fill="#c8c3bc" transform="scale(1,-1)" d="M256 440c136.957 0 248 -111.083 248 -248c0 -136.997 -111.043 -248 -248 -248s-248 111.003 -248 248c0 136.917 111.043 248 248 248zM256 330c-23.1963 0 -42 -18.8037 -42 -42s18.8037 -42 42 -42s42 18.8037 42 42s-18.8037 42 -42 42zM312 76v24 c0 6.62695 -5.37305 12 -12 12h-12v100c0 6.62695 -5.37305 12 -12 12h-64c-6.62695 0 -12 -5.37305 -12 -12v-24c0 -6.62695 5.37305 -12 12 -12h12v-64h-12c-6.62695 0 -12 -5.37305 -12 -12v-24c0 -6.62695 5.37305 -12 12 -12h88c6.62695 0 12 5.37305 12 12z"/></svg>
<span id="t82" class="t " style="left:115px;top:302.51px;font-size:32px;line-height:32px;color:#c8c3bc;letter-spacing:0.39px;">Information</span>
<svg class="ic" style="left:56.2px;top:385.8px;" width="35.2" height="35.2" viewBox="0 -448 512 512"><path fill="#c8c3bc" transform="scale(1,-1)" d="M487.4 132.3c4.89941 -2.7998 7.09961 -8.59961 5.59961 -14.0996c-11.0996 -35.7002 -30 -67.9004 -54.7002 -94.6006c-3.7998 -4.19922 -9.89941 -5.09961 -14.7998 -2.2998l-42.5996 24.6006c-18 -15.3008 -38.6006 -27.2002 -60.8008 -35.1006v-49.2002 c0 -5.59961 -3.89941 -10.5 -9.39941 -11.6992c-34.9004 -7.80078 -72.5 -8.2002 -109.2 0c-5.5 1.19922 -9.40039 6.09961 -9.40039 11.6992v49.2002c-22.2998 7.7998 -42.8994 19.7002 -60.7998 35.1006l-42.5996 -24.6006c-4.7998 -2.7998 -11 -1.7998 -14.7998 2.2998 c-24.7002 26.8008 -43.6006 59 -54.7002 94.6006c-1.60059 5.39941 0.599609 11.2002 5.5 14l42.5996 24.5996c-4.2998 23.2002 -4.2998 47 0 70.2002l-42.5996 24.5996c-4.90039 2.80078 -7.2002 8.60059 -5.5 14c11.0996 35.7002 30 67.9004 54.7002 94.6006 c3.7998 4.2002 9.89941 5.09961 14.7998 2.2998l42.5 -24.5996c18 15.2998 38.5996 27.1992 60.7998 35.0996v49.2002c0 5.59961 3.90039 10.5 9.40039 11.7002c34.8994 7.7998 72.5 8.19922 109.199 0c5.5 -1.2002 9.40039 -6.10059 9.40039 -11.7002v-49.1006 c22.2998 -7.7998 42.9004 -19.6992 60.7998 -35.0996l42.6006 24.5996c4.7998 2.80078 11 1.80078 14.7998 -2.2998c24.7002 -26.7998 43.5996 -59 54.7002 -94.5996c1.59961 -5.40039 -0.600586 -11.2002 -5.5 -14l-42.6006 -24.6006 c4.2998 -23.1992 4.2998 -47 0 -70.1992zM256 112c44.0996 0 80 35.9004 80 80s-35.9004 80 -80 80s-80 -35.9004 -80 -80s35.9004 -80 80 -80z"/></svg>
<span id="t83" class="t " style="left:115px;top:388.91px;font-size:32px;line-height:32px;color:#c8c3bc;letter-spacing:0.11px;">Scan Options</span>
<svg class="ic" style="left:56.2px;top:472.2px;" width="35.2" height="35.2" viewBox="0 -448 512 512"><path fill="#c8c3bc" transform="scale(1,-1)" d="M458.622 192.08l45.9844 -45.0039c13.7012 -12.9727 7.32227 -36.0371 -10.6641 -40.3389l-62.6504 -15.9902l17.6611 -62.0146c4.99023 -17.834 -11.8252 -34.665 -29.6611 -29.6719l-61.9941 17.667l-15.9834 -62.6709 c-4.33887 -18.1533 -27.8252 -24.1553 -40.3252 -10.668l-44.9893 46.001l-44.9912 -46.001c-12.6289 -13.3496 -35.8857 -7.90625 -40.3252 10.668l-15.9834 62.6709l-61.9941 -17.667c-17.832 -4.99121 -34.6523 11.833 -29.6611 29.6719l17.6611 62.0146 l-62.6504 15.9902c-17.9795 4.2998 -24.3721 27.3613 -10.6641 40.3389l45.9854 45.0039l-45.9854 45.0049c-13.7012 12.9707 -7.32227 36.0371 10.665 40.3379l62.6504 15.9902l-17.6611 62.0146c-4.99023 17.834 11.8242 34.665 29.6611 29.6709l61.9951 -17.667 l15.9834 62.6709c4.27832 17.9023 27.6953 24.0195 40.3252 10.6689l44.9893 -46.3418l44.9902 46.3428c12.7744 13.5039 36.0947 7.03027 40.3252 -10.6689l15.9834 -62.6709l61.9941 17.667c17.832 4.99219 34.6523 -11.833 29.6611 -29.6709l-17.6611 -62.0146 l62.6504 -15.9902c17.9795 -4.2998 24.3721 -27.3623 10.6641 -40.3389z"/></svg>
<span id="t84" class="t " style="left:115px;top:475.31px;font-size:32px;line-height:32px;color:#c8c3bc;letter-spacing:0.4px;">Signer Certificate</span>
<svg class="ic" style="left:56.2px;top:558.6px;" width="35.2" height="35.2" viewBox="0 -448 512 512"><path fill="#c8c3bc" transform="scale(1,-1)" d="M80 80c8.83105 0 16 -7.16895 16 -16v-64c0 -8.83105 -7.16895 -16 -16 -16h-64c-8.83105 0 -16 7.16895 -16 16v64c0 8.83105 7.16895 16 16 16h64zM80 400c8.83105 0 16 -7.16895 16 -16v-64c0 -8.83105 -7.16895 -16 -16 -16h-64c-8.83105 0 -16 7.16895 -16 16v64 c0 8.83105 7.16895 16 16 16h64zM80 240c8.83105 0 16 -7.16895 16 -16v-64c0 -8.83105 -7.16895 -16 -16 -16h-64c-8.83105 0 -16 7.16895 -16 16v64c0 8.83105 7.16895 16 16 16h64zM496 64c8.83105 0 16 -7.16895 16 -16v-32c0 -8.83105 -7.16895 -16 -16 -16h-320 c-8.83105 0 -16 7.16895 -16 16v32c0 8.83105 7.16895 16 16 16h320zM496 384c8.83105 0 16 -7.16895 16 -16v-32c0 -8.83105 -7.16895 -16 -16 -16h-320c-8.83105 0 -16 7.16895 -16 16v32c0 8.83105 7.16895 16 16 16h320zM496 224c8.83105 0 16 -7.16895 16 -16v-32 c0 -8.83105 -7.16895 -16 -16 -16h-320c-8.83105 0 -16 7.16895 -16 16v32c0 8.83105 7.16895 16 16 16h320z"/></svg>
<span id="t85" class="t " style="left:115px;top:561.71px;font-size:32px;line-height:32px;color:#c8c3bc;letter-spacing:-0.05px;">Permissions</span>
<svg class="ic" style="left:60.64px;top:645.85px;" width="26.32" height="33.5" viewBox="0 -1536 1408 1792"><path fill="#c8c3bc" transform="scale(1,-1)" d="M493 1053q16 0 27.5 11.5t11.5 27.5t-11.5 27.5t-27.5 11.5t-27 -11.5t-11 -27.5t11 -27.5t27 -11.5zM915 1053q16 0 27 11.5t11 27.5t-11 27.5t-27 11.5t-27.5 -11.5t-11.5 -27.5t11.5 -27.5t27.5 -11.5zM103 869q42 0 72 -30t30 -72v-430q0 -43 -29.5 -73t-72.5 -30 t-73 30t-30 73v430q0 42 30 72t73 30zM1163 850v-666q0 -46 -32 -78t-77 -32h-75v-227q0 -43 -30 -73t-73 -30t-73 30t-30 73v227h-138v-227q0 -43 -30 -73t-73 -30q-42 0 -72 30t-30 73l-1 227h-74q-46 0 -78 32t-32 78v666h918zM931 1255q107 -55 171 -153.5t64 -215.5 h-925q0 117 64 215.5t172 153.5l-71 131q-7 13 5 20q13 6 20 -6l72 -132q95 42 201 42t201 -42l72 132q7 12 20 6q12 -7 5 -20zM1408 767v-430q0 -43 -30 -73t-73 -30q-42 0 -72 30t-30 73v430q0 43 30 72.5t72 29.5q43 0 73 -29.5t30 -72.5z"/></svg>
<span id="t86" class="t " style="left:115px;top:648.11px;font-size:32px;line-height:32px;color:#c8c3bc;letter-spacing:0.03px;">Android API</span>
<svg class="ic" style="left:56.2px;top:731.4px;" width="35.2" height="35.2" viewBox="0 -448 512 512"><path fill="#c8c3bc" transform="scale(1,-1)" d="M464 448c26.5098 0 48 -21.4902 48 -48v-288c0 -26.5098 -21.4902 -48 -48 -48h-288c-26.5098 0 -48 21.4902 -48 48v288c0 26.5098 21.4902 48 48 48h288zM176 32h208v-48c0 -26.5098 -21.4902 -48 -48 -48h-288c-26.5098 0 -48 21.4902 -48 48v288 c0 26.5098 21.4902 48 48 48h48v-208c0 -44.1123 35.8877 -80 80 -80z"/></svg>
<span id="t87" class="t " style="left:115px;top:734.51px;font-size:32px;line-height:32px;color:#c8c3bc;letter-spacing:0.37px;">Browsable Activities</span>
<svg class="ic" style="left:56.2px;top:817.8px;" width="35.2" height="35.2" viewBox="0 -448 512 512"><path fill="#c8c3bc" transform="scale(1,-1)" d="M466.5 364.3c17.7998 -7.39941 29.5 -24.8994 29.5 -44.2998c0 -221.3 -135.9 -344.6 -221.6 -380.3c-11.8008 -4.90039 -25.1006 -4.90039 -36.9004 0c-107 44.5996 -221.5 181.8 -221.5 380.3c0 19.4004 11.7002 36.9004 29.5996 44.2998l192 80 c5.67578 2.35449 11.96 3.6543 18.4824 3.6543c6.52148 0 12.7432 -1.2998 18.418 -3.6543zM256.1 1.7002c93.7002 46.5996 172.5 156.3 175.801 307.7l-175.9 73.2998z"/></svg>
<span id="t88" class="t " style="left:115px;top:820.91px;font-size:32px;line-height:32px;color:#c8c3bc;letter-spacing:0.28px;">Security Analysis</span>
<svg class="ic" style="left:436.75px;top:818.4px;" width="16" height="32" viewBox="0 -448 256 512"><path fill="#c8c3bc" transform="scale(1,-1)" d="M31.7002 209l136 136c9.39941 9.40039 24.5996 9.40039 33.8994 0l22.6006 -22.5996c9.39941 -9.40039 9.39941 -24.6006 0 -33.9004l-96.2998 -96.5l96.3994 -96.4004c9.40039 -9.39941 9.40039 -24.5996 0 -33.8994l-22.5996 -22.7002 c-9.40039 -9.40039 -24.6006 -9.40039 -33.9004 0l-136 136c-9.5 9.40039 -9.5 24.5996 -0.0996094 34z"/></svg>
<svg class="ic" style="left:56.2px;top:904.2px;" width="35.2" height="35.2" viewBox="0 -448 512 512"><path fill="#c8c3bc" transform="scale(1,-1)" d="M511.988 159.1c-0.478516 -17.4297 -15.2168 -31.0996 -32.6533 -31.0996h-55.335v-16c0 -21.8643 -4.88184 -42.584 -13.5996 -61.1445l60.2275 -60.2285c12.4961 -12.4971 12.4961 -32.7578 0 -45.2549c-12.498 -12.4971 -32.7588 -12.4961 -45.2559 0 l-54.7363 54.7363c-24.75 -20.0732 -56.2852 -32.1084 -90.6357 -32.1084v244c0 6.62695 -5.37305 12 -12 12h-24c-6.62695 0 -12 -5.37305 -12 -12v-244c-34.3506 0 -65.8857 12.0352 -90.6357 32.1084l-54.7363 -54.7363c-12.498 -12.4971 -32.7588 -12.4961 -45.2559 0 c-12.4961 12.4971 -12.4961 32.7578 0 45.2549l60.2275 60.2285c-8.71777 18.5605 -13.5996 39.2803 -13.5996 61.1445v16h-55.334c-17.4355 0 -32.1748 13.6699 -32.6533 31.0996c-0.49707 18.084 14.0156 32.9004 31.9873 32.9004h56v58.7451l-46.6279 46.6279 c-12.4961 12.4971 -12.4961 32.7578 0 45.2549c12.498 12.4971 32.7578 12.4971 45.2559 0l54.627 -54.6279h229.489l54.627 54.627c12.498 12.4971 32.7578 12.4971 45.2559 0c12.4961 -12.4971 12.4961 -32.7578 0 -45.2549l-46.627 -46.627v-58.7451h56 c17.9717 0 32.4844 -14.8164 31.9883 -32.9004zM257 448c61.8564 0 112 -50.1436 112 -112h-224c0 61.8564 50.1436 112 112 112z"/></svg>
<span id="t89" class="t " style="left:115px;top:907.31px;font-size:32px;line-height:32px;color:#c8c3bc;letter-spacing:0.07px;">Malware Analysis</span>
<svg class="ic" style="left:436.75px;top:904.8px;" width="16" height="32" viewBox="0 -448 256 512"><path fill="#c8c3bc" transform="scale(1,-1)" d="M31.7002 209l136 136c9.39941 9.40039 24.5996 9.40039 33.8994 0l22.6006 -22.5996c9.39941 -9.40039 9.39941 -24.6006 0 -33.9004l-96.2998 -96.5l96.3994 -96.4004c9.40039 -9.39941 9.40039 -24.5996 0 -33.8994l-22.5996 -22.7002 c-9.40039 -9.40039 -24.6006 -9.40039 -33.9004 0l-136 136c-9.5 9.40039 -9.5 24.5996 -0.0996094 34z"/></svg>
<svg class="ic" style="left:58.4px;top:990.6px;" width="30.8" height="35.2" viewBox="0 -448 448 512"><path fill="#c8c3bc" transform="scale(1,-1)" d="M416 240c17.6699 0 32 -14.3301 32 -32v-32c0 -17.6699 -14.3301 -32 -32 -32h-144v-144c0 -17.6699 -14.3301 -32 -32 -32h-32c-17.6699 0 -32 14.3301 -32 32v144h-144c-17.6699 0 -32 14.3301 -32 32v32c0 17.6699 14.3301 32 32 32h144v144 c0 17.6699 14.3301 32 32 32h32c17.6699 0 32 -14.3301 32 -32v-144h144z"/></svg>
<span id="t90" class="t " style="left:115px;top:993.71px;font-size:32px;line-height:32px;color:#c8c3bc;letter-spacing:-0.21px;">Reconnaissance</span>
<svg class="ic" style="left:436.75px;top:991.2px;" width="16" height="32" viewBox="0 -448 256 512"><path fill="#c8c3bc" transform="scale(1,-1)" d="M31.7002 209l136 136c9.39941 9.40039 24.5996 9.40039 33.8994 0l22.6006 -22.5996c9.39941 -9.40039 9.39941 -24.6006 0 -33.9004l-96.2998 -96.5l96.3994 -96.4004c9.40039 -9.39941 9.40039 -24.5996 0 -33.8994l-22.5996 -22.7002 c-9.40039 -9.40039 -24.6006 -9.40039 -33.9004 0l-136 136c-9.5 9.40039 -9.5 24.5996 -0.0996094 34z"/></svg>
<svg class="ic" style="left:56.2px;top:1077px;" width="35.2" height="35.2" viewBox="0 -448 512 512"><path fill="#c8c3bc" transform="scale(1,-1)" d="M296 416h192c13.2549 0 24 -10.7451 24 -24v-160c0 -13.2549 -10.7451 -24 -24 -24h-192c-13.2549 0 -24 10.7451 -24 24v160c0 13.2549 10.7451 24 24 24zM216 416c13.2549 0 24 -10.7451 24 -24v-160c0 -13.2549 -10.7451 -24 -24 -24h-192 c-13.2549 0 -24 10.7451 -24 24v160c0 13.2549 10.7451 24 24 24h192zM0 152c0 13.2549 10.7451 24 24 24h192c13.2549 0 24 -10.7451 24 -24v-160c0 -13.2549 -10.7451 -24 -24 -24h-192c-13.2549 0 -24 10.7451 -24 24v160zM296 -32c-13.2549 0 -24 10.7451 -24 24v160 c0 13.2549 10.7451 24 24 24h192c13.2549 0 24 -10.7451 24 -24v-160c0 -13.2549 -10.7451 -24 -24 -24h-192z"/></svg>
<span id="t91" class="t " style="left:115px;top:1080.11px;font-size:32px;line-height:32px;color:#c8c3bc;letter-spacing:0.31px;">Components</span>
<svg class="ic" style="left:436.75px;top:1077.6px;" width="16" height="32" viewBox="0 -448 256 512"><path fill="#c8c3bc" transform="scale(1,-1)" d="M31.7002 209l136 136c9.39941 9.40039 24.5996 9.40039 33.8994 0l22.6006 -22.5996c9.39941 -9.40039 9.39941 -24.6006 0 -33.9004l-96.2998 -96.5l96.3994 -96.4004c9.40039 -9.39941 9.40039 -24.5996 0 -33.8994l-22.5996 -22.7002 c-9.40039 -9.40039 -24.6006 -9.40039 -33.9004 0l-136 136c-9.5 9.40039 -9.5 24.5996 -0.0996094 34z"/></svg>
<svg class="ic" style="left:60.6px;top:1163.4px;" width="26.4" height="35.2" viewBox="0 -448 384 512"><path fill="#c8c3bc" transform="scale(1,-1)" d="M181.9 191.9c-5 16 -4.90039 46.8994 -2 46.8994c8.39941 0 7.59961 -36.8994 2 -46.8994zM180.2 144.7c9.59961 -17.4004 21.7998 -31.2002 34.5 -40.7998c-23.9004 -4.7002 -44.6006 -14.9004 -62.9004 -21.9004c11.1006 19.4004 20.7002 42.5 28.4004 62.7002z M86.0996 19.9004c5.80078 15.6992 28.2002 33.8994 34.9004 40.1992c-21.7002 -34.7998 -34.9004 -41 -34.9004 -40.1992zM248 288h136v-328c0 -13.2998 -10.7002 -24 -24 -24h-336c-13.2998 0 -24 10.7002 -24 24v464c0 13.2998 10.7002 24 24 24h200v-136 c0 -13.2002 10.7998 -24 24 -24zM240 116.2c-20 12.2002 -33.2998 29 -42.7002 53.7998c4.5 18.5 11.6006 46.5996 6.2002 64.2002c-4.7002 29.3994 -42.4004 26.5 -47.7998 6.7998c-5 -18.2998 -0.400391 -44.0996 8.09961 -77 c-11.5996 -27.5996 -28.7002 -64.5996 -40.7998 -85.7998c-0.0996094 0 -0.0996094 -0.100586 -0.200195 -0.100586c-27.0996 -13.8994 -73.5996 -44.5 -54.5 -68c5.60059 -6.89941 16 -10 21.5 -10c17.9004 0 35.7002 18 61.1006 61.8008 c25.7998 8.5 54.0996 19.0996 79 23.1992c21.6992 -11.7998 47.0996 -19.5 64 -19.5c29.1992 0 31.1992 32 19.6992 43.4004c-13.8994 13.5996 -54.2998 9.7002 -73.5996 7.2002zM377 343c4.5 -4.5 7 -10.5996 7 -16.9004v-6.09961h-128v128h6c6.40039 0 12.5 -2.5 17 -7z M302.9 87.7002c0 0 -5.7002 -6.7998 -42.8008 9c40.3008 2.89941 46.9004 -6.2998 42.8008 -9z"/></svg>
<span id="t92" class="t " style="left:115px;top:1166.51px;font-size:32px;line-height:32px;color:#c8c3bc;letter-spacing:-0.43px;">PDF Report</span>
<svg class="ic" style="left:56.2px;top:1249.8px;" width="35.2" height="35.2" viewBox="0 -448 512 512"><path fill="#c8c3bc" transform="scale(1,-1)" d="M448 256c35.3496 0 64 -28.6504 64 -64v-112c0 -8.83984 -7.16016 -16 -16 -16h-48v-96c0 -17.6699 -14.3301 -32 -32 -32h-320c-17.6699 0 -32 14.3301 -32 32v96h-48c-8.83984 0 -16 7.16016 -16 16v112c0 35.3496 28.6504 64 64 64v160c0 17.6699 14.3301 32 32 32 h274.74c8.49023 0 16.6299 -3.37012 22.6299 -9.37012l45.2598 -45.25c6 -6.00977 9.37012 -14.1396 9.37012 -22.6299v-114.75zM384 0v96h-256v-96h256zM384 224v96h-48c-8.83984 0 -16 7.16016 -16 16v48h-192v-160h256zM432 152c13.25 0 24 10.75 24 24 c0 13.2598 -10.75 24 -24 24s-24 -10.7402 -24 -24c0 -13.25 10.75 -24 24 -24z"/></svg>
<span id="t93" class="t " style="left:115px;top:1252.91px;font-size:32px;line-height:32px;color:#c8c3bc;letter-spacing:0.18px;">Print Report</span>
<svg class="ic" style="left:56.2px;top:1336.2px;" width="35.2" height="35.2" viewBox="0 -448 512 512"><path fill="#c8c3bc" transform="scale(1,-1)" d="M256 440c137 0 248 -111 248 -248s-111 -248 -248 -248s-248 111 -248 248s111 248 248 248zM371.7 168c16.3994 9.09961 16.3994 32.7998 0 42l-176 107c-15.9004 8.7998 -35.7002 -2.59961 -35.7002 -21v-208c0 -18.5 19.9004 -29.7998 35.7002 -21z"/></svg>
<span id="t94" class="t " style="left:115px;top:1339.31px;font-size:32px;line-height:32px;color:#c8c3bc;letter-spacing:0.28px;">Start Dynamic Analysis</span>
</aside>
<div class="b sbar" style="left:3554px;top:0px;width:30px;height:1966px;background:#2b2b2b;"></div>
<div class="b sthumb" style="left:3562px;top:2px;width:16px;height:46px;background:#727272;border-radius:8px;"></div>
<div class="b ledge" style="left:0px;top:0px;width:2px;height:1966px;background:rgba(140,140,140,.5);"></div>
<div class="anno">
<span id="t95" class="t " style="left:327.5px;top:307.49px;font-size:36px;line-height:36px;color:#ff0000;font-weight:350;font-family:'Liberation Sans','Noto Sans CJK SC',sans-serif;letter-spacing:0.66px;">相关信息</span>
<span id="t96" class="t " style="left:356px;top:393.49px;font-size:36px;line-height:36px;color:#ff0000;font-weight:350;font-family:'Liberation Sans','Noto Sans CJK SC',sans-serif;letter-spacing:0.66px;width:144px;overflow:hidden;">扫描选项</span>
<span id="t97" class="t " style="left:376.5px;top:478.99px;font-size:36px;line-height:36px;color:#ff0000;font-weight:350;font-family:'Liberation Sans','Noto Sans CJK SC',sans-serif;letter-spacing:0.16px;">签名证书</span>
<span id="t98" class="t " style="left:318.1px;top:560.49px;font-size:36px;line-height:36px;color:#ff0000;font-weight:350;font-family:'Liberation Sans','Noto Sans CJK SC',sans-serif;letter-spacing:0.39px;">权限相关</span>
<span id="t99" class="t " style="left:326.5px;top:648.19px;font-size:36px;line-height:36px;color:#ff0000;font-weight:350;font-family:'Liberation Sans','Noto Sans CJK SC',sans-serif;letter-spacing:-1.02px;">安卓</span><span id="t100" class="t " style="left:399px;top:649.19px;font-size:36px;line-height:36px;color:#ff0000;font-weight:700;letter-spacing:-1.26px;-webkit-text-stroke:0.7px #ff0000;">API</span>
<span id="t101" class="t " style="left:426.5px;top:736.49px;font-size:36px;line-height:36px;color:#ff0000;font-weight:350;font-family:'Liberation Sans','Noto Sans CJK SC',sans-serif;letter-spacing:-0.21px;">可浏览</span><span id="t102" class="t " style="left:535.6px;top:737.49px;font-size:36px;line-height:36px;color:#ff0000;font-weight:700;letter-spacing:-0.36px;-webkit-text-stroke:0.7px #ff0000;">Activity</span>
<span id="t103" class="t " style="left:390.5px;top:826.99px;font-size:36px;line-height:36px;color:#ff0000;font-weight:350;font-family:'Liberation Sans','Noto Sans CJK SC',sans-serif;letter-spacing:0.23px;">安全分析</span>
<span id="t104" class="t " style="left:394px;top:909.19px;font-size:36px;line-height:36px;color:#ff0000;font-weight:350;font-family:'Liberation Sans','Noto Sans CJK SC',sans-serif;letter-spacing:0.2px;">恶意应用分析</span>
<span id="t105" class="t " style="left:386.3px;top:995.09px;font-size:36px;line-height:36px;color:#ff0000;font-weight:350;font-family:'Liberation Sans','Noto Sans CJK SC',sans-serif;letter-spacing:0.44px;">信息收集相关</span>
<span id="t106" class="t " style="left:338.5px;top:1088.49px;font-size:36px;line-height:36px;color:#ff0000;font-weight:350;font-family:'Liberation Sans','Noto Sans CJK SC',sans-serif;letter-spacing:0.36px;">四大组件相关</span>
</div>
<pre class="wm1">     __ ____        ___ __      
 ___/ // / / __ _  &lt;  // /_ ___
/ _  //_  _//  &#x27; \ / // __/(_-&lt;
\_,_/  /_/ /_/_/_//_/ \__//___/</pre>
<span id="t107" class="t wm2" style="left:2531.4px;top:1809.58px;font-size:78px;line-height:78px;color:transparent;font-family:'Liberation Serif','DejaVu Serif',serif;letter-spacing:9.5px;-webkit-text-stroke:1.1px #c8c8c8;transform:scaleX(1.18);transform-origin:0 0;">initsec blog.gm7.org</span>
</body></html>
